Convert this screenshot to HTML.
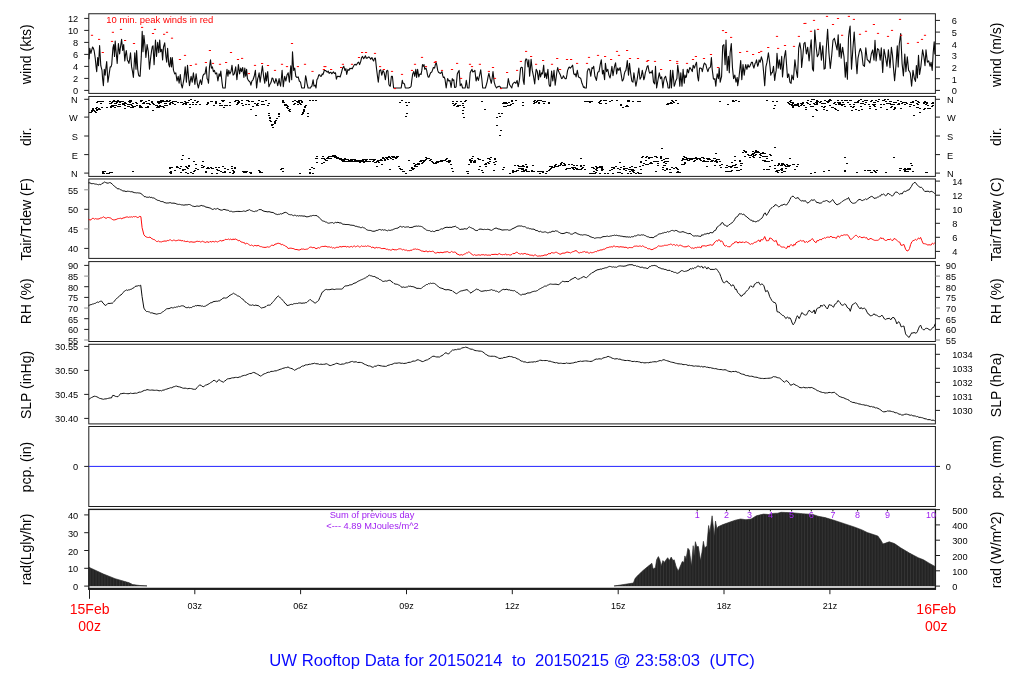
<!DOCTYPE html>
<html lang="en"><head><meta charset="utf-8"><title>UW Rooftop Data</title>
<style>html,body{margin:0;padding:0;background:#fff;}body{width:1024px;height:700px;position:relative;overflow:hidden;font-family:"Liberation Sans",Arial,Helvetica,sans-serif;}</style>
</head><body>
<svg width="1024" height="700" viewBox="0 0 1024 700" style="display:block;position:absolute;left:0;top:0">
<rect width="1024" height="700" fill="#fff"/>
<g opacity="0.995" font-family="'Liberation Sans', Arial, Helvetica, sans-serif">
<rect x="88.8" y="13.75" width="846.6" height="79.65" fill="none" stroke="#1c1c1c" stroke-width="1"/>
<rect x="88.8" y="96.45" width="846.6" height="79.95" fill="none" stroke="#1c1c1c" stroke-width="1"/>
<rect x="88.8" y="178.95" width="846.6" height="79.45" fill="none" stroke="#1c1c1c" stroke-width="1"/>
<rect x="88.8" y="261.60" width="846.6" height="79.90" fill="none" stroke="#1c1c1c" stroke-width="1"/>
<rect x="88.8" y="344.30" width="846.6" height="79.60" fill="none" stroke="#1c1c1c" stroke-width="1"/>
<rect x="88.8" y="426.50" width="846.6" height="80.00" fill="none" stroke="#1c1c1c" stroke-width="1"/>
<rect x="88.8" y="509.40" width="846.6" height="79.78" fill="none" stroke="#1c1c1c" stroke-width="1.35"/>
<line x1="84.2" x2="88.8" y1="90.4" y2="90.4" stroke="#1c1c1c" stroke-width="1"/>
<text x="78.2" y="94.4" font-size="9.25" text-anchor="end" fill="#000">0</text>
<line x1="84.2" x2="88.8" y1="78.4" y2="78.4" stroke="#1c1c1c" stroke-width="1"/>
<text x="78.2" y="82.4" font-size="9.25" text-anchor="end" fill="#000">2</text>
<line x1="84.2" x2="88.8" y1="66.4" y2="66.4" stroke="#1c1c1c" stroke-width="1"/>
<text x="78.2" y="70.4" font-size="9.25" text-anchor="end" fill="#000">4</text>
<line x1="84.2" x2="88.8" y1="54.4" y2="54.4" stroke="#1c1c1c" stroke-width="1"/>
<text x="78.2" y="58.4" font-size="9.25" text-anchor="end" fill="#000">6</text>
<line x1="84.2" x2="88.8" y1="42.4" y2="42.4" stroke="#1c1c1c" stroke-width="1"/>
<text x="78.2" y="46.4" font-size="9.25" text-anchor="end" fill="#000">8</text>
<line x1="84.2" x2="88.8" y1="30.4" y2="30.4" stroke="#1c1c1c" stroke-width="1"/>
<text x="78.2" y="34.4" font-size="9.25" text-anchor="end" fill="#000">10</text>
<line x1="84.2" x2="88.8" y1="18.4" y2="18.4" stroke="#1c1c1c" stroke-width="1"/>
<text x="78.2" y="22.4" font-size="9.25" text-anchor="end" fill="#000">12</text>
<line x1="935.4" x2="940" y1="90.4" y2="90.4" stroke="#1c1c1c" stroke-width="1"/>
<text x="951.8" y="94.4" font-size="9.25" text-anchor="start" fill="#000">0</text>
<line x1="935.4" x2="940" y1="78.7" y2="78.7" stroke="#1c1c1c" stroke-width="1"/>
<text x="951.8" y="82.7" font-size="9.25" text-anchor="start" fill="#000">1</text>
<line x1="935.4" x2="940" y1="67.1" y2="67.1" stroke="#1c1c1c" stroke-width="1"/>
<text x="951.8" y="71" font-size="9.25" text-anchor="start" fill="#000">2</text>
<line x1="935.4" x2="940" y1="55.4" y2="55.4" stroke="#1c1c1c" stroke-width="1"/>
<text x="951.8" y="59.4" font-size="9.25" text-anchor="start" fill="#000">3</text>
<line x1="935.4" x2="940" y1="43.8" y2="43.8" stroke="#1c1c1c" stroke-width="1"/>
<text x="951.8" y="47.7" font-size="9.25" text-anchor="start" fill="#000">4</text>
<line x1="935.4" x2="940" y1="32.1" y2="32.1" stroke="#1c1c1c" stroke-width="1"/>
<text x="951.8" y="36.1" font-size="9.25" text-anchor="start" fill="#000">5</text>
<line x1="935.4" x2="940" y1="20.4" y2="20.4" stroke="#1c1c1c" stroke-width="1"/>
<text x="951.8" y="24.4" font-size="9.25" text-anchor="start" fill="#000">6</text>
<text transform="translate(31 54.2) rotate(-90) scale(1.012 1)" font-size="13.85" text-anchor="middle" fill="#000">wind (kts)</text>
<text transform="translate(1001.3 54.8) rotate(-90) scale(1.012 1)" font-size="13.85" text-anchor="middle" fill="#000">wind (m/s)</text>
<line x1="84.2" x2="88.8" y1="99.3" y2="99.3" stroke="#1c1c1c" stroke-width="1"/>
<text x="77.8" y="103.2" font-size="9.25" text-anchor="end" fill="#000">N</text>
<line x1="935.4" x2="940" y1="99.3" y2="99.3" stroke="#1c1c1c" stroke-width="1"/>
<text x="946.9" y="103.2" font-size="9.25" text-anchor="start" fill="#000">N</text>
<line x1="84.2" x2="88.8" y1="117.1" y2="117.1" stroke="#1c1c1c" stroke-width="1"/>
<text x="77.8" y="121" font-size="9.25" text-anchor="end" fill="#000">W</text>
<line x1="935.4" x2="940" y1="117.1" y2="117.1" stroke="#1c1c1c" stroke-width="1"/>
<text x="946.9" y="121" font-size="9.25" text-anchor="start" fill="#000">W</text>
<line x1="84.2" x2="88.8" y1="136" y2="136" stroke="#1c1c1c" stroke-width="1"/>
<text x="77.8" y="139.9" font-size="9.25" text-anchor="end" fill="#000">S</text>
<line x1="935.4" x2="940" y1="136" y2="136" stroke="#1c1c1c" stroke-width="1"/>
<text x="946.9" y="139.9" font-size="9.25" text-anchor="start" fill="#000">S</text>
<line x1="84.2" x2="88.8" y1="154.6" y2="154.6" stroke="#1c1c1c" stroke-width="1"/>
<text x="77.8" y="158.5" font-size="9.25" text-anchor="end" fill="#000">E</text>
<line x1="935.4" x2="940" y1="154.6" y2="154.6" stroke="#1c1c1c" stroke-width="1"/>
<text x="946.9" y="158.5" font-size="9.25" text-anchor="start" fill="#000">E</text>
<line x1="84.2" x2="88.8" y1="173.1" y2="173.1" stroke="#1c1c1c" stroke-width="1"/>
<text x="77.8" y="177" font-size="9.25" text-anchor="end" fill="#000">N</text>
<line x1="935.4" x2="940" y1="173.1" y2="173.1" stroke="#1c1c1c" stroke-width="1"/>
<text x="946.9" y="177" font-size="9.25" text-anchor="start" fill="#000">N</text>
<text transform="translate(31 136.7) rotate(-90) scale(1.012 1)" font-size="13.85" text-anchor="middle" fill="#000">dir.</text>
<text transform="translate(1001.3 136.6) rotate(-90) scale(1.012 1)" font-size="13.85" text-anchor="middle" fill="#000">dir.</text>
<line x1="84.2" x2="88.8" y1="189.8" y2="189.8" stroke="#888" stroke-width="1"/>
<text x="78.2" y="193.8" font-size="9.25" text-anchor="end" fill="#000">55</text>
<line x1="84.2" x2="88.8" y1="209.3" y2="209.3" stroke="#1c1c1c" stroke-width="1"/>
<text x="78.2" y="213.3" font-size="9.25" text-anchor="end" fill="#000">50</text>
<line x1="84.2" x2="88.8" y1="228.9" y2="228.9" stroke="#888" stroke-width="1"/>
<text x="78.2" y="232.8" font-size="9.25" text-anchor="end" fill="#000">45</text>
<line x1="84.2" x2="88.8" y1="248.4" y2="248.4" stroke="#1c1c1c" stroke-width="1"/>
<text x="78.2" y="252.4" font-size="9.25" text-anchor="end" fill="#000">40</text>
<line x1="935.4" x2="940" y1="181.1" y2="181.1" stroke="#1c1c1c" stroke-width="1"/>
<text x="952.2" y="185" font-size="9.25" text-anchor="start" fill="#000">14</text>
<line x1="935.4" x2="940" y1="195.2" y2="195.2" stroke="#1c1c1c" stroke-width="1"/>
<text x="952.2" y="199.1" font-size="9.25" text-anchor="start" fill="#000">12</text>
<line x1="935.4" x2="940" y1="209.2" y2="209.2" stroke="#1c1c1c" stroke-width="1"/>
<text x="952.2" y="213.2" font-size="9.25" text-anchor="start" fill="#000">10</text>
<line x1="935.4" x2="940" y1="223.3" y2="223.3" stroke="#1c1c1c" stroke-width="1"/>
<text x="952.2" y="227.2" font-size="9.25" text-anchor="start" fill="#000">8</text>
<line x1="935.4" x2="940" y1="237.3" y2="237.3" stroke="#1c1c1c" stroke-width="1"/>
<text x="952.2" y="241.3" font-size="9.25" text-anchor="start" fill="#000">6</text>
<line x1="935.4" x2="940" y1="251.4" y2="251.4" stroke="#1c1c1c" stroke-width="1"/>
<text x="952.2" y="255.3" font-size="9.25" text-anchor="start" fill="#000">4</text>
<text transform="translate(31 219.3) rotate(-90) scale(1.012 1)" font-size="13.85" text-anchor="middle" fill="#000">Tair/Tdew (F)</text>
<text transform="translate(1001.3 219.3) rotate(-90) scale(1.012 1)" font-size="13.85" text-anchor="middle" fill="#000">Tair/Tdew (C)</text>
<line x1="84.2" x2="88.8" y1="265.4" y2="265.4" stroke="#1c1c1c" stroke-width="1"/>
<text x="78.2" y="269.3" font-size="9.25" text-anchor="end" fill="#000">90</text>
<line x1="935.4" x2="940" y1="265.4" y2="265.4" stroke="#1c1c1c" stroke-width="1"/>
<text x="945.8" y="269.3" font-size="9.25" text-anchor="start" fill="#000">90</text>
<line x1="84.2" x2="88.8" y1="276.1" y2="276.1" stroke="#888" stroke-width="1"/>
<text x="78.2" y="280" font-size="9.25" text-anchor="end" fill="#000">85</text>
<line x1="935.4" x2="940" y1="276.1" y2="276.1" stroke="#888" stroke-width="1"/>
<text x="945.8" y="280" font-size="9.25" text-anchor="start" fill="#000">85</text>
<line x1="84.2" x2="88.8" y1="286.7" y2="286.7" stroke="#1c1c1c" stroke-width="1"/>
<text x="78.2" y="290.7" font-size="9.25" text-anchor="end" fill="#000">80</text>
<line x1="935.4" x2="940" y1="286.7" y2="286.7" stroke="#1c1c1c" stroke-width="1"/>
<text x="945.8" y="290.7" font-size="9.25" text-anchor="start" fill="#000">80</text>
<line x1="84.2" x2="88.8" y1="297.4" y2="297.4" stroke="#1c1c1c" stroke-width="1"/>
<text x="78.2" y="301.3" font-size="9.25" text-anchor="end" fill="#000">75</text>
<line x1="935.4" x2="940" y1="297.4" y2="297.4" stroke="#1c1c1c" stroke-width="1"/>
<text x="945.8" y="301.3" font-size="9.25" text-anchor="start" fill="#000">75</text>
<line x1="84.2" x2="88.8" y1="308" y2="308" stroke="#888" stroke-width="1"/>
<text x="78.2" y="312" font-size="9.25" text-anchor="end" fill="#000">70</text>
<line x1="935.4" x2="940" y1="308" y2="308" stroke="#888" stroke-width="1"/>
<text x="945.8" y="312" font-size="9.25" text-anchor="start" fill="#000">70</text>
<line x1="84.2" x2="88.8" y1="318.7" y2="318.7" stroke="#1c1c1c" stroke-width="1"/>
<text x="78.2" y="322.6" font-size="9.25" text-anchor="end" fill="#000">65</text>
<line x1="935.4" x2="940" y1="318.7" y2="318.7" stroke="#1c1c1c" stroke-width="1"/>
<text x="945.8" y="322.6" font-size="9.25" text-anchor="start" fill="#000">65</text>
<line x1="84.2" x2="88.8" y1="329.4" y2="329.4" stroke="#1c1c1c" stroke-width="1"/>
<text x="78.2" y="333.3" font-size="9.25" text-anchor="end" fill="#000">60</text>
<line x1="935.4" x2="940" y1="329.4" y2="329.4" stroke="#1c1c1c" stroke-width="1"/>
<text x="945.8" y="333.3" font-size="9.25" text-anchor="start" fill="#000">60</text>
<line x1="84.2" x2="88.8" y1="340" y2="340" stroke="#888" stroke-width="1"/>
<text x="78.2" y="344" font-size="9.25" text-anchor="end" fill="#000">55</text>
<line x1="935.4" x2="940" y1="340" y2="340" stroke="#888" stroke-width="1"/>
<text x="945.8" y="344" font-size="9.25" text-anchor="start" fill="#000">55</text>
<text transform="translate(31 301.3) rotate(-90) scale(1.012 1)" font-size="13.85" text-anchor="middle" fill="#000">RH (%)</text>
<text transform="translate(1001.3 301.3) rotate(-90) scale(1.012 1)" font-size="13.85" text-anchor="middle" fill="#000">RH (%)</text>
<line x1="84.2" x2="88.8" y1="346.4" y2="346.4" stroke="#1c1c1c" stroke-width="1"/>
<text x="78.2" y="350.3" font-size="9.25" text-anchor="end" fill="#000">30.55</text>
<line x1="84.2" x2="88.8" y1="370.4" y2="370.4" stroke="#1c1c1c" stroke-width="1"/>
<text x="78.2" y="374.3" font-size="9.25" text-anchor="end" fill="#000">30.50</text>
<line x1="84.2" x2="88.8" y1="394.4" y2="394.4" stroke="#1c1c1c" stroke-width="1"/>
<text x="78.2" y="398.3" font-size="9.25" text-anchor="end" fill="#000">30.45</text>
<line x1="84.2" x2="88.8" y1="418.4" y2="418.4" stroke="#1c1c1c" stroke-width="1"/>
<text x="78.2" y="422.3" font-size="9.25" text-anchor="end" fill="#000">30.40</text>
<line x1="935.4" x2="940" y1="354.3" y2="354.3" stroke="#1c1c1c" stroke-width="1"/>
<text x="952.2" y="358.2" font-size="9.25" text-anchor="start" fill="#000">1034</text>
<line x1="935.4" x2="940" y1="368.3" y2="368.3" stroke="#1c1c1c" stroke-width="1"/>
<text x="952.2" y="372.3" font-size="9.25" text-anchor="start" fill="#000">1033</text>
<line x1="935.4" x2="940" y1="382.4" y2="382.4" stroke="#1c1c1c" stroke-width="1"/>
<text x="952.2" y="386.3" font-size="9.25" text-anchor="start" fill="#000">1032</text>
<line x1="935.4" x2="940" y1="396.4" y2="396.4" stroke="#1c1c1c" stroke-width="1"/>
<text x="952.2" y="400.3" font-size="9.25" text-anchor="start" fill="#000">1031</text>
<line x1="935.4" x2="940" y1="410.4" y2="410.4" stroke="#1c1c1c" stroke-width="1"/>
<text x="952.2" y="414.4" font-size="9.25" text-anchor="start" fill="#000">1030</text>
<text transform="translate(31 385) rotate(-90) scale(1.012 1)" font-size="13.85" text-anchor="middle" fill="#000">SLP (inHg)</text>
<text transform="translate(1001.3 385) rotate(-90) scale(1.012 1)" font-size="13.85" text-anchor="middle" fill="#000">SLP (hPa)</text>
<line x1="84.2" x2="88.8" y1="466.4" y2="466.4" stroke="#1c1c1c" stroke-width="1"/>
<text x="78.2" y="470.3" font-size="9.25" text-anchor="end" fill="#000">0</text>
<line x1="935.4" x2="940" y1="466.4" y2="466.4" stroke="#1c1c1c" stroke-width="1"/>
<text x="945.8" y="470.3" font-size="9.25" text-anchor="start" fill="#000">0</text>
<line x1="88.8" x2="935.4" y1="466.4" y2="466.4" stroke="#2222ff" stroke-width="1"/>
<text transform="translate(31 467.1) rotate(-90) scale(1.012 1)" font-size="13.85" text-anchor="middle" fill="#000">pcp. (in)</text>
<text transform="translate(1001.3 466.9) rotate(-90) scale(1.012 1)" font-size="13.85" text-anchor="middle" fill="#000">pcp. (mm)</text>
<line x1="84.2" x2="88.8" y1="514.9" y2="514.9" stroke="#1c1c1c" stroke-width="1"/>
<text x="78.2" y="518.9" font-size="9.25" text-anchor="end" fill="#000">40</text>
<line x1="84.2" x2="88.8" y1="532.7" y2="532.7" stroke="#1c1c1c" stroke-width="1"/>
<text x="78.2" y="536.6" font-size="9.25" text-anchor="end" fill="#000">30</text>
<line x1="84.2" x2="88.8" y1="550.5" y2="550.5" stroke="#1c1c1c" stroke-width="1"/>
<text x="78.2" y="554.5" font-size="9.25" text-anchor="end" fill="#000">20</text>
<line x1="84.2" x2="88.8" y1="568.3" y2="568.3" stroke="#1c1c1c" stroke-width="1"/>
<text x="78.2" y="572.2" font-size="9.25" text-anchor="end" fill="#000">10</text>
<line x1="84.2" x2="88.8" y1="586.1" y2="586.1" stroke="#1c1c1c" stroke-width="1"/>
<text x="78.2" y="590.1" font-size="9.25" text-anchor="end" fill="#000">0</text>
<line x1="935.4" x2="940" y1="509.6" y2="509.6" stroke="#1c1c1c" stroke-width="1"/>
<text x="952.2" y="513.6" font-size="9.25" text-anchor="start" fill="#000">500</text>
<line x1="935.4" x2="940" y1="524.9" y2="524.9" stroke="#1c1c1c" stroke-width="1"/>
<text x="952.2" y="528.9" font-size="9.25" text-anchor="start" fill="#000">400</text>
<line x1="935.4" x2="940" y1="540.2" y2="540.2" stroke="#1c1c1c" stroke-width="1"/>
<text x="952.2" y="544.2" font-size="9.25" text-anchor="start" fill="#000">300</text>
<line x1="935.4" x2="940" y1="555.5" y2="555.5" stroke="#1c1c1c" stroke-width="1"/>
<text x="952.2" y="559.5" font-size="9.25" text-anchor="start" fill="#000">200</text>
<line x1="935.4" x2="940" y1="570.8" y2="570.8" stroke="#1c1c1c" stroke-width="1"/>
<text x="952.2" y="574.8" font-size="9.25" text-anchor="start" fill="#000">100</text>
<line x1="935.4" x2="940" y1="586.1" y2="586.1" stroke="#1c1c1c" stroke-width="1"/>
<text x="952.2" y="590.1" font-size="9.25" text-anchor="start" fill="#000">0</text>
<text transform="translate(31 549.4) rotate(-90) scale(1.012 1)" font-size="13.85" text-anchor="middle" fill="#000">rad(Lgly/hr)</text>
<text transform="translate(1001.3 550) rotate(-90) scale(1.012 1)" font-size="13.85" text-anchor="middle" fill="#000">rad (W/m^2)</text>
<line x1="88.3" x2="935.9" y1="588.8" y2="588.8" stroke="#1c1c1c" stroke-width="2"/>
<line x1="194.8" x2="194.8" y1="589.2" y2="594.2" stroke="#1c1c1c" stroke-width="1"/>
<text x="194.8" y="609.2" font-size="9" text-anchor="middle" fill="#000">03z</text>
<line x1="300.6" x2="300.6" y1="589.2" y2="594.2" stroke="#1c1c1c" stroke-width="1"/>
<text x="300.6" y="609.2" font-size="9" text-anchor="middle" fill="#000">06z</text>
<line x1="406.5" x2="406.5" y1="589.2" y2="594.2" stroke="#1c1c1c" stroke-width="1"/>
<text x="406.5" y="609.2" font-size="9" text-anchor="middle" fill="#000">09z</text>
<line x1="512.3" x2="512.3" y1="589.2" y2="594.2" stroke="#1c1c1c" stroke-width="1"/>
<text x="512.3" y="609.2" font-size="9" text-anchor="middle" fill="#000">12z</text>
<line x1="618.2" x2="618.2" y1="589.2" y2="594.2" stroke="#1c1c1c" stroke-width="1"/>
<text x="618.2" y="609.2" font-size="9" text-anchor="middle" fill="#000">15z</text>
<line x1="724" x2="724" y1="589.2" y2="594.2" stroke="#1c1c1c" stroke-width="1"/>
<text x="724" y="609.2" font-size="9" text-anchor="middle" fill="#000">18z</text>
<line x1="829.9" x2="829.9" y1="589.2" y2="594.2" stroke="#1c1c1c" stroke-width="1"/>
<text x="829.9" y="609.2" font-size="9" text-anchor="middle" fill="#000">21z</text>
<line x1="89.5" x2="89.5" y1="589.2" y2="598.8" stroke="#1c1c1c" stroke-width="1"/>
<text transform="translate(89.6 614.3) scale(1.012 1)" font-size="13.85" text-anchor="middle" fill="#ff0000">15Feb</text>
<text transform="translate(89.6 630.8) scale(1.012 1)" font-size="13.85" text-anchor="middle" fill="#ff0000">00z</text>
<text transform="translate(936.2 614.3) scale(1.012 1)" font-size="13.85" text-anchor="middle" fill="#ff0000">16Feb</text>
<text transform="translate(936.2 630.8) scale(1.012 1)" font-size="13.85" text-anchor="middle" fill="#ff0000">00z</text>
<text x="269.3" y="666.2" font-size="16.66" fill="#0808ff" style="white-space:pre">UW Rooftop Data for 20150214  to  20150215 @ 23:58:03  (UTC)</text>
<path d="M88.8 585.9 L88.8 567.2 L103.4 574 L115.2 578.7 L129.2 582.8 L132.7 584.6 L140 585.5 L147 585.9 L147 585.9 Z" fill="#222" stroke="#222" stroke-width="0.6" stroke-linejoin="round"/>
<path d="M614.1 585.9 L614.1 586 L633.4 583 L635.2 578.2 L637.8 575.6 L642.2 571.2 L647.5 566.8 L651.9 563.3 L653.1 568.9 L655.4 567.7 L656.6 559.8 L658.4 556.6 L659.8 559.8 L661.2 565.9 L662.9 560.6 L664.2 562.4 L667.7 557.7 L669.4 560.6 L671.2 557.1 L672.9 560.6 L674.2 559.8 L675.9 565.9 L678.2 571.2 L682.3 561.5 L684 562.4 L684.9 555.9 L686.1 558.9 L687.9 548.3 L689.3 550.1 L691.4 565.9 L693.2 545.7 L694 556.2 L695.4 541.7 L696.7 546.6 L698.4 546.6 L700.5 560.6 L701.9 552.7 L703.4 541.3 L704.6 548.3 L706.9 545.7 L708.6 525.5 L709.9 532.5 L712.1 515.8 L714.3 536 L715.5 521.1 L716.9 529 L718.1 526.7 L723 524.6 L730.1 522 L735.3 520.2 L740.6 519 L745.9 519.7 L751.2 519 L756.4 515.8 L763.5 514.1 L768.7 514.5 L773.1 513.4 L777.6 513.2 L781.1 512.3 L791.6 512.7 L802.2 513.7 L812.7 514.4 L818 516.2 L825 517.6 L833.8 520.2 L844.4 523.7 L854.9 527.2 L862 529.9 L867.2 532.5 L877.8 536 L880.4 539.5 L883 543.9 L885.7 543.1 L889.2 541.8 L894.5 543.6 L900.6 547.8 L909.4 553.1 L918.2 557.7 L923.5 559.8 L928.7 562.9 L934.9 566.4 L934.9 585.9 Z" fill="#222" stroke="#222" stroke-width="0.6" stroke-linejoin="round"/>
<clipPath id="rc"><path d="M88.8 585.9 L88.8 567.2 L103.4 574 L115.2 578.7 L129.2 582.8 L132.7 584.6 L140 585.5 L147 585.9 L147 585.9 Z"/><path d="M614.1 585.9 L614.1 586 L633.4 583 L635.2 578.2 L637.8 575.6 L642.2 571.2 L647.5 566.8 L651.9 563.3 L653.1 568.9 L655.4 567.7 L656.6 559.8 L658.4 556.6 L659.8 559.8 L661.2 565.9 L662.9 560.6 L664.2 562.4 L667.7 557.7 L669.4 560.6 L671.2 557.1 L672.9 560.6 L674.2 559.8 L675.9 565.9 L678.2 571.2 L682.3 561.5 L684 562.4 L684.9 555.9 L686.1 558.9 L687.9 548.3 L689.3 550.1 L691.4 565.9 L693.2 545.7 L694 556.2 L695.4 541.7 L696.7 546.6 L698.4 546.6 L700.5 560.6 L701.9 552.7 L703.4 541.3 L704.6 548.3 L706.9 545.7 L708.6 525.5 L709.9 532.5 L712.1 515.8 L714.3 536 L715.5 521.1 L716.9 529 L718.1 526.7 L723 524.6 L730.1 522 L735.3 520.2 L740.6 519 L745.9 519.7 L751.2 519 L756.4 515.8 L763.5 514.1 L768.7 514.5 L773.1 513.4 L777.6 513.2 L781.1 512.3 L791.6 512.7 L802.2 513.7 L812.7 514.4 L818 516.2 L825 517.6 L833.8 520.2 L844.4 523.7 L854.9 527.2 L862 529.9 L867.2 532.5 L877.8 536 L880.4 539.5 L883 543.9 L885.7 543.1 L889.2 541.8 L894.5 543.6 L900.6 547.8 L909.4 553.1 L918.2 557.7 L923.5 559.8 L928.7 562.9 L934.9 566.4 L934.9 585.9 Z"/></clipPath>
<path clip-path="url(#rc)" d="M90.2 510V587 M93.1 510V587 M96.1 510V587 M99 510V587 M102 510V587 M104.9 510V587 M107.8 510V587 M110.8 510V587 M113.7 510V587 M116.7 510V587 M119.6 510V587 M122.5 510V587 M125.5 510V587 M128.4 510V587 M131.4 510V587 M134.3 510V587 M137.2 510V587 M140.2 510V587 M143.1 510V587 M146.1 510V587 M149 510V587 M151.9 510V587 M154.9 510V587 M157.8 510V587 M160.8 510V587 M163.7 510V587 M166.6 510V587 M169.6 510V587 M172.5 510V587 M175.5 510V587 M178.4 510V587 M181.3 510V587 M184.3 510V587 M187.2 510V587 M190.2 510V587 M193.1 510V587 M196 510V587 M199 510V587 M201.9 510V587 M204.9 510V587 M207.8 510V587 M210.7 510V587 M213.7 510V587 M216.6 510V587 M219.6 510V587 M222.5 510V587 M225.4 510V587 M228.4 510V587 M231.3 510V587 M234.3 510V587 M237.2 510V587 M240.1 510V587 M243.1 510V587 M246 510V587 M249 510V587 M251.9 510V587 M254.8 510V587 M257.8 510V587 M260.7 510V587 M263.7 510V587 M266.6 510V587 M269.5 510V587 M272.5 510V587 M275.4 510V587 M278.4 510V587 M281.3 510V587 M284.2 510V587 M287.2 510V587 M290.1 510V587 M293.1 510V587 M296 510V587 M298.9 510V587 M301.9 510V587 M304.8 510V587 M307.8 510V587 M310.7 510V587 M313.6 510V587 M316.6 510V587 M319.5 510V587 M322.5 510V587 M325.4 510V587 M328.3 510V587 M331.3 510V587 M334.2 510V587 M337.2 510V587 M340.1 510V587 M343 510V587 M346 510V587 M348.9 510V587 M351.9 510V587 M354.8 510V587 M357.7 510V587 M360.7 510V587 M363.6 510V587 M366.6 510V587 M369.5 510V587 M372.4 510V587 M375.4 510V587 M378.3 510V587 M381.3 510V587 M384.2 510V587 M387.1 510V587 M390.1 510V587 M393 510V587 M396 510V587 M398.9 510V587 M401.8 510V587 M404.8 510V587 M407.7 510V587 M410.7 510V587 M413.6 510V587 M416.5 510V587 M419.5 510V587 M422.4 510V587 M425.4 510V587 M428.3 510V587 M431.2 510V587 M434.2 510V587 M437.1 510V587 M440.1 510V587 M443 510V587 M445.9 510V587 M448.9 510V587 M451.8 510V587 M454.8 510V587 M457.7 510V587 M460.6 510V587 M463.6 510V587 M466.5 510V587 M469.5 510V587 M472.4 510V587 M475.3 510V587 M478.3 510V587 M481.2 510V587 M484.2 510V587 M487.1 510V587 M490 510V587 M493 510V587 M495.9 510V587 M498.9 510V587 M501.8 510V587 M504.7 510V587 M507.7 510V587 M510.6 510V587 M513.6 510V587 M516.5 510V587 M519.4 510V587 M522.4 510V587 M525.3 510V587 M528.3 510V587 M531.2 510V587 M534.1 510V587 M537.1 510V587 M540 510V587 M543 510V587 M545.9 510V587 M548.8 510V587 M551.8 510V587 M554.7 510V587 M557.7 510V587 M560.6 510V587 M563.5 510V587 M566.5 510V587 M569.4 510V587 M572.4 510V587 M575.3 510V587 M578.2 510V587 M581.2 510V587 M584.1 510V587 M587.1 510V587 M590 510V587 M592.9 510V587 M595.9 510V587 M598.8 510V587 M601.8 510V587 M604.7 510V587 M607.6 510V587 M610.6 510V587 M613.5 510V587 M616.5 510V587 M619.4 510V587 M622.3 510V587 M625.3 510V587 M628.2 510V587 M631.2 510V587 M634.1 510V587 M637 510V587 M640 510V587 M642.9 510V587 M645.9 510V587 M648.8 510V587 M651.7 510V587 M654.7 510V587 M657.6 510V587 M660.6 510V587 M663.5 510V587 M666.4 510V587 M669.4 510V587 M672.3 510V587 M675.3 510V587 M678.2 510V587 M681.1 510V587 M684.1 510V587 M687 510V587 M690 510V587 M692.9 510V587 M695.8 510V587 M698.8 510V587 M701.7 510V587 M704.7 510V587 M707.6 510V587 M710.5 510V587 M713.5 510V587 M716.4 510V587 M719.4 510V587 M722.3 510V587 M725.2 510V587 M728.2 510V587 M731.1 510V587 M734.1 510V587 M737 510V587 M739.9 510V587 M742.9 510V587 M745.8 510V587 M748.8 510V587 M751.7 510V587 M754.6 510V587 M757.6 510V587 M760.5 510V587 M763.5 510V587 M766.4 510V587 M769.3 510V587 M772.3 510V587 M775.2 510V587 M778.2 510V587 M781.1 510V587 M784 510V587 M787 510V587 M789.9 510V587 M792.9 510V587 M795.8 510V587 M798.7 510V587 M801.7 510V587 M804.6 510V587 M807.6 510V587 M810.5 510V587 M813.4 510V587 M816.4 510V587 M819.3 510V587 M822.3 510V587 M825.2 510V587 M828.1 510V587 M831.1 510V587 M834 510V587 M837 510V587 M839.9 510V587 M842.8 510V587 M845.8 510V587 M848.7 510V587 M851.7 510V587 M854.6 510V587 M857.5 510V587 M860.5 510V587 M863.4 510V587 M866.4 510V587 M869.3 510V587 M872.2 510V587 M875.2 510V587 M878.1 510V587 M881.1 510V587 M884 510V587 M886.9 510V587 M889.9 510V587 M892.8 510V587 M895.8 510V587 M898.7 510V587 M901.6 510V587 M904.6 510V587 M907.5 510V587 M910.5 510V587 M913.4 510V587 M916.3 510V587 M919.3 510V587 M922.2 510V587 M925.2 510V587 M928.1 510V587 M931 510V587 M934 510V587" stroke="#3c3c3c" stroke-width="0.7" fill="none"/>
<text x="372" y="517.8" font-size="9.3" text-anchor="middle" fill="#a020f0">Sum of previous day</text>
<text x="372.5" y="528.6" font-size="9.3" text-anchor="middle" fill="#a020f0">&lt;--- 4.89 MJoules/m^2</text>
<text x="697.2" y="518" font-size="9" text-anchor="middle" fill="#a020f0">1</text>
<line x1="697.2" x2="697.2" y1="509.4" y2="511.4" stroke="#1c1c1c" stroke-width="1"/>
<text x="726.6" y="518" font-size="9" text-anchor="middle" fill="#a020f0">2</text>
<line x1="726.6" x2="726.6" y1="509.4" y2="511.4" stroke="#1c1c1c" stroke-width="1"/>
<text x="749.4" y="518" font-size="9" text-anchor="middle" fill="#a020f0">3</text>
<line x1="749.4" x2="749.4" y1="509.4" y2="511.4" stroke="#1c1c1c" stroke-width="1"/>
<text x="770.4" y="518" font-size="9" text-anchor="middle" fill="#a020f0">4</text>
<line x1="770.4" x2="770.4" y1="509.4" y2="511.4" stroke="#1c1c1c" stroke-width="1"/>
<text x="791.6" y="518" font-size="9" text-anchor="middle" fill="#a020f0">5</text>
<line x1="791.6" x2="791.6" y1="509.4" y2="511.4" stroke="#1c1c1c" stroke-width="1"/>
<text x="811.3" y="518" font-size="9" text-anchor="middle" fill="#a020f0">6</text>
<line x1="811.3" x2="811.3" y1="509.4" y2="511.4" stroke="#1c1c1c" stroke-width="1"/>
<text x="832.9" y="518" font-size="9" text-anchor="middle" fill="#a020f0">7</text>
<line x1="832.9" x2="832.9" y1="509.4" y2="511.4" stroke="#1c1c1c" stroke-width="1"/>
<text x="857.6" y="518" font-size="9" text-anchor="middle" fill="#a020f0">8</text>
<line x1="857.6" x2="857.6" y1="509.4" y2="511.4" stroke="#1c1c1c" stroke-width="1"/>
<text x="887.4" y="518" font-size="9" text-anchor="middle" fill="#a020f0">9</text>
<line x1="887.4" x2="887.4" y1="509.4" y2="511.4" stroke="#1c1c1c" stroke-width="1"/>
<line x1="372" x2="372" y1="509.4" y2="511.4" stroke="#1c1c1c" stroke-width="1"/>
<text x="936" y="518" font-size="9" text-anchor="end" fill="#a020f0">10</text>
<g fill="none" stroke-linejoin="round" stroke-linecap="round">
<path d="M88.9 182.9 L90 182.8 L91.1 183.6 L92.2 183.7 L93.3 183.5 L94.4 183.9 L95.5 184.1 L96.6 184.2 L97.6 184.5 L98.7 184.8 L99.7 184.3 L100.8 184.8 L102 183.4 L103.1 183.2 L104.3 182 L105.7 182.5 L107 183.1 L108.3 183.1 L109.6 182.6 L110.9 182.9 L112.2 184.1 L113.3 185.1 L114.4 186.3 L115.5 186.9 L116.6 188.2 L117.9 188.9 L119.3 188.7 L120.5 189.9 L121.6 189.9 L122.8 191.2 L123.9 190.8 L125 191.2 L126.1 191.6 L127.2 191.2 L128.4 191.3 L129.5 191.4 L130.7 191.8 L131.9 191.7 L133 192.1 L134.2 192.6 L135.3 192.7 L136.4 192.9 L137.6 192.8 L138.7 193 L139.8 193.1 L140.9 193.5 L142.2 194.6 L143.5 195.6 L144.8 197 L145.8 196.6 L146.8 197.4 L147.8 197.2 L148.8 197.3 L149.8 196.9 L150.8 197.7 L151.8 197.3 L152.8 198.1 L153.8 197.9 L154.8 198.5 L155.8 199.3 L156.8 199.8 L157.8 200.4 L158.8 200.5 L159.8 200.8 L160.8 201.5 L161.8 201.6 L162.9 201.6 L163.9 202.2 L164.9 202.8 L165.9 202.8 L166.9 203.2 L167.9 202.9 L168.9 203 L169.9 202.6 L170.9 202.8 L171.9 203.3 L172.9 203.1 L174 203.2 L175.1 203.3 L176.2 203.8 L177.3 204.2 L178.4 204.4 L179.5 204.3 L180.6 204.6 L181.7 204.9 L182.8 204.9 L183.9 205.2 L185 204.9 L186.1 204.8 L187.2 204.9 L188.3 204.5 L189.4 204.5 L190.5 204.9 L191.6 205.5 L192.7 206.2 L193.8 206.3 L194.9 206.6 L195.9 206.3 L196.9 206 L197.9 206.1 L198.9 206.3 L199.9 206 L200.9 205.6 L201.9 205.4 L202.9 206.1 L203.9 205.9 L204.9 206.5 L206 207.2 L207 207.2 L208 207.5 L209.1 207.8 L210.1 208 L211.2 208.6 L212.2 209.4 L213.3 209.3 L214.4 208.6 L215.5 209.1 L216.6 208.9 L217.7 208.4 L218.9 209.3 L220 209.8 L221.2 210.2 L222.6 210 L223.9 209.3 L225 209.6 L226.1 210 L227.2 210.2 L228.3 210.2 L229.4 211.3 L230.5 211.3 L231.6 211.3 L232.7 211.9 L233.7 211.8 L234.8 211.7 L235.8 211.5 L236.9 211.4 L237.9 211.4 L239 211.4 L240.2 211.5 L241.3 211.5 L242.4 211.4 L243.5 211 L244.7 211.2 L245.8 211.4 L247 210.5 L248.2 210.3 L249.4 209.6 L250.4 210.3 L251.5 210.7 L252.5 211.1 L253.6 211.5 L254.6 211.6 L255.7 211 L256.7 211.1 L257.8 210.6 L258.8 209.6 L259.9 209.6 L260.9 209.6 L261.9 210 L263 211 L264 211 L265 211.6 L266 211.4 L267 211.9 L268 211.8 L269 211.7 L270 211.9 L271 212.3 L272 212.4 L273.1 212.5 L274.1 213.1 L275.2 213.9 L276.2 214.1 L277.3 214.6 L278.4 214.3 L279.5 214.3 L280.6 213.7 L281.7 214 L282.9 213.3 L284 212.8 L285.2 212.3 L286.3 212.6 L287.4 213.1 L288.5 214.4 L289.6 214.6 L290.6 214.8 L291.6 214.7 L292.6 215.3 L293.6 215.7 L294.6 215.2 L295.6 215.4 L296.6 216 L297.7 215.6 L298.7 216.1 L299.8 215.6 L300.8 216 L301.9 215.8 L302.9 216.1 L304 216.1 L305 216 L306 216.8 L307.1 216.8 L308.1 216.7 L309.1 216.5 L310.2 215.9 L311.2 216.1 L312.3 215.6 L313.3 215.4 L314.6 215.6 L315.9 215.5 L317.2 215.8 L318.2 216.9 L319.2 217.4 L320.2 218.6 L321.2 219.8 L322.2 220.7 L323.3 221.1 L324.3 221.1 L325.3 222.1 L326.4 222.1 L327.4 222.8 L328.4 223.2 L329.4 223.1 L330.4 222.8 L331.4 222.7 L332.4 222.5 L333.4 223.3 L334.4 223 L335.6 222.3 L336.8 222.7 L338 222.1 L339 222.9 L340 222.9 L341.1 222.9 L342.1 223.8 L343.1 224.3 L344.1 224.2 L345.1 224.5 L346.1 224.5 L347.1 224.5 L348.1 224.6 L349.1 224.6 L350.1 225.1 L351.1 225.1 L352.1 225.3 L353.1 225.3 L354.1 225.5 L355.2 226.3 L356.2 226.2 L357.2 226.6 L358.2 226.9 L359.2 226.9 L360.3 227.6 L361.3 227.7 L362.4 227.1 L363.4 227.7 L364.5 228 L365.5 228.6 L366.6 229.8 L367.6 230.1 L368.7 230.4 L369.8 230.4 L370.8 230.5 L371.9 231 L372.9 231.3 L374 231.2 L375.1 231.2 L376.1 230.4 L377.2 230.5 L378.2 230 L379.3 229.5 L380.3 229.6 L381.3 230.2 L382.3 229.6 L383.3 230.2 L384.3 229.8 L385.3 230 L386.3 230.4 L387.5 230.8 L388.6 230.1 L389.8 230.4 L390.8 230.3 L391.8 229.9 L392.8 229.8 L393.8 229.1 L394.8 228.8 L395.8 228.4 L396.8 228.3 L398 228 L399.1 227.1 L400.3 226.3 L401.4 226.9 L402.4 227 L403.5 226.5 L404.5 227.1 L405.6 227.2 L406.7 226.9 L407.7 226.9 L408.8 226.9 L409.8 227.7 L410.9 227.4 L412 227.4 L413 227.1 L414.1 226.4 L415.1 226.4 L416.2 226 L417.3 226.3 L418.4 226 L419.5 226.3 L420.6 226.3 L421.6 226.6 L422.6 227.1 L423.6 227.8 L424.6 229 L425.6 229.3 L426.6 230.2 L427.6 230.4 L428.6 230.6 L429.6 230.6 L430.6 231.3 L431.7 231.5 L432.7 231 L433.7 231.6 L434.8 231.5 L435.9 230.6 L437 230.4 L438.1 230.4 L439.2 230.3 L440.4 229.1 L441.6 228.8 L442.7 229 L443.9 228.1 L445 227.7 L446 227.3 L447 227.3 L448 227.3 L449 227.6 L450 227 L451 227.6 L452 227.2 L453.1 226.7 L454.1 226.8 L455.2 226 L456.4 227.2 L457.5 227.6 L458.7 228.4 L459.9 229.5 L460.9 229.4 L462 229 L463 229.4 L464 228.8 L465.1 228.7 L466.1 229.1 L467.3 228.8 L468.4 227.4 L469.6 226.9 L470.6 227.6 L471.7 228 L472.7 228.5 L473.7 228.8 L474.8 230.2 L475.8 230.4 L476.8 230.6 L477.9 230.3 L478.9 229.3 L480 229.1 L481 229.1 L482.1 229.3 L483.3 229.6 L484.4 229.3 L485.5 229.5 L486.6 229.5 L487.8 229.2 L488.9 229.5 L490.2 230 L491.6 230.4 L492.7 229.7 L493.8 229 L494.9 228.3 L496 228.1 L497 228.2 L498 229.1 L499 228.9 L500 229.3 L501 229.6 L502 230.1 L503 230 L504.1 229.9 L505.3 229.8 L506.4 229.8 L507.5 229.7 L508.6 230.2 L509.8 230.2 L510.9 229.8 L511.9 229 L513 228.5 L514 228.1 L515 227.5 L516.1 227 L517.1 226.3 L518.1 226.1 L519.2 225.9 L520.2 226.1 L521.3 225.9 L522.3 226.3 L523.4 226.7 L524.4 226.6 L525.5 227 L526.5 227.9 L527.6 228.1 L528.7 228.1 L529.7 228.8 L530.8 228.7 L531.8 229.2 L532.9 229.1 L534 229.2 L535 229.9 L536.1 230.6 L537.1 230.4 L538.2 231.2 L539.2 231.8 L540.3 231.2 L541.4 231.9 L542.4 232.2 L543.5 232.2 L544.5 231.9 L545.6 231.9 L546.6 232.4 L547.7 232.9 L548.7 232.7 L549.8 232.1 L550.9 232.3 L552 231.3 L553.1 231.2 L554.2 231.6 L555.3 230.8 L556.4 231 L557.5 231.2 L558.6 232.1 L559.7 232.6 L560.8 233.3 L561.9 233.5 L563 233.6 L564 233.3 L565.1 233.1 L566.1 232.4 L567.2 232.5 L568.3 232.9 L569.4 233 L570.5 234 L571.6 234.2 L572.7 234 L573.8 233.2 L574.9 232.7 L576 232.7 L577.1 233.6 L578.1 234 L579.2 234.3 L580.3 234.8 L581.4 234.8 L582.4 235.1 L583.5 234.8 L584.5 234.7 L585.6 234.8 L586.7 235.1 L587.8 235.5 L588.9 235.7 L590 236.7 L591.1 236.9 L592.2 237.5 L593.3 237.5 L594.4 238.3 L595.5 238.1 L596.5 237.8 L597.6 237.7 L598.6 237.7 L599.7 237.8 L600.8 237.8 L601.9 237.1 L603 236.7 L604.1 236.5 L605.2 236.6 L606.3 236.3 L607.4 236.1 L608.5 236.5 L609.5 236.3 L610.5 236 L611.5 235.9 L612.6 235.5 L613.6 235.5 L614.6 235.1 L615.6 235.5 L616.7 235.2 L617.7 235.6 L618.7 235.8 L619.8 235.8 L620.8 236.2 L621.8 236.2 L622.9 236.4 L624 236.8 L625 236.5 L626.1 237.1 L627.1 236.7 L628.2 237.2 L629.2 236.8 L630.3 237.4 L631.3 236.7 L632.3 236.8 L633.3 236.8 L634.3 235.8 L635.3 236 L636.3 235.8 L637.3 235.1 L638.3 234.9 L639.4 235.2 L640.4 235.3 L641.4 234.8 L642.5 235 L643.5 234.8 L644.5 235.4 L645.6 235.7 L646.6 236.4 L647.7 236.8 L648.7 236.9 L649.8 237.6 L650.9 237.5 L652 237.4 L653.1 237.9 L654.1 237 L655.2 236.3 L656.2 236 L657.2 235.5 L658.3 234.2 L659.3 233.9 L660.3 233.8 L661.3 233.6 L662.3 233.1 L663.4 233 L664.4 232.4 L665.4 232.5 L666.4 232.4 L667.4 231.5 L668.4 232 L669.5 231.6 L670.5 231.1 L671.5 230.5 L672.5 230.4 L673.6 230.8 L674.7 231 L675.8 230.3 L676.9 230.7 L678.2 231.6 L679.5 232.1 L680.7 232.2 L681.8 231.9 L683 231.6 L684.2 232.2 L685.3 232.5 L686.5 233 L687.7 233.5 L688.8 233.7 L690 233.4 L691.2 234.2 L692.4 235.4 L693.6 236 L694.6 236 L695.7 235.8 L696.7 236 L697.8 235.8 L698.8 236.2 L699.8 236.3 L700.8 236.5 L701.8 234.7 L702.9 235.2 L703.9 234.6 L704.9 233.8 L705.9 234.2 L706.9 233.6 L707.9 233.3 L708.9 234 L709.9 232.5 L710.9 232.6 L711.9 232.8 L712.9 232.7 L714.2 230.7 L715.5 230.4 L717.3 226.9 L718.4 226.2 L719.4 225.3 L720.5 224.9 L721.5 222.9 L722.6 222.5 L724.3 225.1 L725.6 225.4 L727 226.5 L728 225.8 L729.1 224.6 L730.1 224.4 L731.2 223.1 L732.2 222.8 L733.4 221.4 L734.5 219.8 L735.7 217.5 L736.9 216.8 L738.1 215.8 L739.3 213.7 L740.4 213.9 L741.5 213.8 L742.6 214.6 L743.7 214 L744.8 215.5 L745.9 216.2 L746.9 216.9 L748 218.1 L749.4 218.9 L750.7 220.4 L751.8 220.1 L752.9 221.7 L754 220.8 L755.1 221.9 L756.2 221.8 L757.3 220.9 L758.4 221.2 L759.5 219.8 L760.7 219.1 L761.8 218.3 L763 216.3 L764 213.9 L765.1 212.8 L766.5 215.4 L767.6 213.7 L768.7 212 L769.8 209.8 L770.9 208.4 L772 207.7 L773 206.7 L774.1 206.4 L775.1 204.7 L776.2 204.9 L777.5 205.8 L778.8 207 L779.9 206.3 L780.9 205.4 L782 205 L783 205.1 L784.1 204 L785.4 204.8 L786.7 204.9 L787.8 203.2 L788.8 201.8 L789.9 199.6 L790.9 197.6 L792 196.4 L793.2 196.2 L794.3 197.3 L795.5 198.4 L796.8 198.1 L798.1 197.5 L799.5 199.7 L800.8 200.5 L801.8 201.1 L802.9 200.5 L804 201.4 L805 200.5 L806 201.3 L807.1 202.8 L808.1 203.1 L809.3 201.8 L810.4 201.2 L811.6 199.6 L812.9 200.5 L814.2 199.6 L815.5 200.8 L816.9 202.8 L818 202.3 L819 203.2 L820.1 203.1 L821.2 203.1 L822.3 202.3 L823.3 201.2 L824.4 201.3 L825.4 200.9 L826.5 200.5 L827.9 201.2 L829.2 202.2 L830.4 202 L831.5 200.6 L832.7 199.6 L833.8 201.3 L834.9 203 L836 204 L837.1 204.9 L838.1 204.2 L839.2 203.9 L840.2 203.1 L841.3 202.4 L842.3 201.4 L843.3 201 L844.4 199.9 L845.4 199.7 L846.4 199 L847.5 198.9 L848.5 197.5 L849.8 200.4 L851.1 202.2 L852.3 203.1 L853.4 203.3 L854.6 203.1 L855.7 202.8 L856.8 201.5 L857.9 200.2 L859 199.6 L860.1 199.3 L861.2 200.2 L862.3 200.6 L863.4 200 L864.5 199.8 L865.6 198.7 L866.7 199.6 L867.8 198.7 L869 197.9 L870.1 197.1 L871.3 196.4 L872.6 196.6 L874 198.4 L875.1 198.1 L876.2 198.1 L877.3 197.2 L878.4 197 L879.4 196.1 L880.5 196.1 L881.5 194.3 L882.6 194.6 L883.6 194 L885.4 195.7 L886.7 195.2 L888 193.1 L889.1 194.2 L890.2 194.4 L891.3 195.7 L892.4 196.1 L893.6 194.9 L894.7 192.8 L895.9 192 L897.2 192.2 L898.6 193.5 L899.8 194.4 L900.9 193.4 L902.1 194 L903.4 191.8 L904.7 191.2 L905.8 191.5 L906.9 190.6 L908 190 L909.1 189.9 L910.3 188 L911.4 186.5 L912.6 184.1 L914 182.7 L915.3 182.4 L916.5 184 L917.6 185.5 L918.8 186.4 L920.1 187.4 L921.4 187.3 L922.6 188.4 L923.8 190.4 L925 191.7 L926 191.1 L927 191.6 L928 190.9 L929.1 191.9 L930.1 191.9 L931.1 191.2 L932.3 191.7 L933.4 192.2 L934.6 193.5" stroke="#0d0d0d" stroke-width="1"/>
<path d="M88.9 219.5 L90 220 L91.1 219.8 L92.2 218.4 L93.3 218.3 L94.4 219.2 L95.5 218.6 L96.7 219 L97.9 219 L99.1 218.9 L100.2 218.1 L101.3 218 L102.4 217.5 L103.5 216.8 L104.8 217.7 L106.1 218.4 L107.4 217.5 L108.7 217.5 L109.7 217.8 L110.8 218.1 L111.8 219 L112.8 219.7 L113.9 220 L114.9 219.8 L116.1 219.5 L117.2 218.9 L118.4 218.6 L119.6 218.4 L120.7 218.2 L121.9 218.9 L123 217.8 L124 218 L125.1 217.4 L126.1 217.1 L127.2 216.8 L128.3 217.4 L129.3 217 L130.4 217.1 L131.4 216.8 L132.5 217.2 L133.6 216.5 L134.6 216.8 L135.7 216.5 L136.7 217 L137.8 217.6 L138.8 217.1 L139.8 216.3 L140.9 216.7 L142.1 227.7 L143.9 234.8 L145.1 236.2 L146.2 236.9 L147.4 237.4 L148.7 237.5 L150 237 L151.1 238.2 L152.1 238.7 L153.2 239.4 L154.2 239.5 L155.3 240.4 L156.4 241.4 L157.4 241.6 L158.5 240.8 L159.5 241.9 L160.6 241.8 L161.7 241.9 L162.8 241.3 L163.9 241.2 L165 240.9 L166.1 241.3 L167.2 240.5 L168.3 240.7 L169.4 240 L170.5 239.8 L171.5 240.6 L172.6 240.7 L173.6 240.1 L174.7 240.3 L175.7 240.8 L176.8 240.6 L177.8 240.3 L178.8 240 L179.9 240.4 L180.9 240.3 L181.9 241 L182.9 240.4 L183.9 241.5 L184.9 240.8 L185.9 241.8 L186.9 241.4 L187.9 241.2 L188.9 242.2 L189.9 242 L191 241.8 L192 241.9 L193 242.2 L194 242.1 L195.1 242.1 L196.1 241.5 L197.2 241.2 L198.2 241.5 L199.3 241.3 L200.4 242 L201.5 241.7 L202.6 241 L203.7 242.1 L204.7 242.1 L205.8 242.5 L206.9 241.6 L208 242.1 L209.1 242.4 L210.1 241.3 L211.2 242.1 L212.2 241.5 L213.3 241.4 L214.4 242.2 L215.4 241.1 L216.5 241.6 L217.5 242 L218.6 241.4 L219.7 240.8 L220.8 240.5 L221.9 241.2 L223 240.3 L224.1 240.5 L225.2 239.3 L226.3 239.5 L227.4 239.5 L228.5 239 L229.6 239.7 L230.7 238.9 L231.8 240.1 L232.9 238.8 L234 239.8 L235.1 238.8 L236.2 239.5 L237.2 239.6 L238.2 240.9 L239.2 240.4 L240.2 240.9 L241.2 242.1 L242.2 242.1 L243.2 242.7 L244.2 242.4 L245.3 244.1 L246.3 243.3 L247.4 243.5 L248.4 244.2 L249.5 245 L250.5 245.5 L251.6 245 L252.6 245.6 L253.7 246.2 L254.8 245.3 L255.9 245.7 L257 245.9 L258.1 245.3 L259.2 246 L260.4 246.6 L261.6 246.7 L262.7 247.2 L263.9 247.3 L265 247.4 L266.2 247.3 L267.3 246.8 L268.5 247.1 L269.6 246.9 L270.7 246 L271.7 245.2 L272.8 245.3 L273.9 245.5 L275 244 L276 244.2 L277.1 243.5 L278.2 243.2 L279.2 243.6 L280.2 243.4 L281.2 244.9 L282.3 244.3 L283.3 245.1 L284.3 245.3 L285.5 246.2 L286.7 246.6 L287.9 248.3 L288.9 248.5 L289.9 248.1 L290.9 248.2 L291.9 248.3 L292.9 248.6 L293.9 248.7 L294.9 249.4 L295.9 249.6 L297 249.4 L298 250 L299 249.9 L300.1 250 L301.1 248.9 L302.2 249.2 L303.2 248.9 L304.2 249.4 L305.3 249.4 L306.3 249.2 L307.4 249.1 L308.5 248.4 L309.6 247.3 L310.7 247.1 L311.8 247.3 L312.8 247.8 L313.9 247.4 L314.9 247.8 L316 248.8 L317.1 248.3 L318.3 247.6 L319.4 248.1 L320.5 247.1 L321.6 246.6 L322.8 246.4 L323.9 246.5 L325 246.2 L326.1 246.3 L327.1 246.9 L328.2 246.9 L329.3 246.8 L330.4 247.4 L331.4 247 L332.5 248 L333.6 247.6 L334.7 248.2 L335.7 247.7 L336.8 247.2 L337.8 247.3 L338.9 247.3 L339.9 246.4 L341 246.9 L342 246.9 L343.1 246.3 L344.1 246.7 L345.1 246.1 L346.2 247.1 L347.2 246.5 L348.2 246.7 L349.2 247.2 L350.2 246.8 L351.3 246.3 L352.3 247.2 L353.3 246.4 L354.3 245.9 L355.4 246.8 L356.4 246.5 L357.4 245.9 L358.4 246.2 L359.4 247 L360.5 246.7 L361.5 245.8 L362.5 246.4 L363.5 246.3 L364.5 246.4 L365.5 246 L366.6 246.5 L367.6 245.8 L368.6 246.1 L369.6 246.4 L370.7 246.6 L371.8 247.8 L372.9 246.9 L374 247.9 L375.1 248.2 L376.2 247.3 L377.3 247.8 L378.4 247.6 L379.5 247.7 L380.7 248.1 L381.8 248.7 L382.9 248.5 L384 248.4 L385.2 248.6 L386.3 249.4 L387.4 248.9 L388.5 250 L389.6 249.7 L390.7 250.2 L391.8 249.9 L392.9 249 L394 249.9 L395.1 249.7 L396.2 249.9 L397.3 249.6 L398.4 249 L399.5 248.8 L400.5 248.8 L401.5 249.2 L402.6 249.9 L403.6 249.4 L404.6 250 L405.6 250.2 L406.7 250.1 L407.7 250.8 L408.8 250.6 L409.8 250.7 L410.9 250.1 L412.1 250.3 L413.2 249.2 L414.4 249.2 L415.5 248.9 L416.6 249.4 L417.7 249.2 L418.8 249.7 L419.8 249.9 L420.9 250.6 L421.9 251.2 L422.9 251 L424 251.6 L425 251.5 L426 250.9 L427.1 251.3 L428.1 252.2 L429.2 251 L430.2 251.5 L431.3 251.6 L432.4 251.2 L433.5 251.4 L434.6 252.8 L435.7 253.1 L436.8 252.8 L437.9 252.2 L439 252.9 L440 252.5 L441 252.2 L442 252.7 L443 252.6 L444 252.1 L445 252 L446.1 252 L447.2 251.5 L448.2 252.1 L449.3 252.6 L450.4 252.4 L451.5 251.4 L452.5 252 L453.6 252.3 L454.7 252 L455.8 252.4 L456.9 254.1 L458 254.2 L459.1 255 L460.1 255.1 L461.2 254.5 L462.2 255.2 L463.3 254.7 L464.3 254.1 L465.4 253.8 L466.4 252.9 L467.5 252.9 L468.5 252 L469.6 252.3 L470.9 253.5 L472.2 254.5 L473.4 255.3 L474.6 254.6 L475.8 255.3 L476.8 255.2 L477.8 255 L478.9 254.8 L479.9 255.1 L480.9 255.2 L481.9 254.5 L482.9 254.9 L483.9 254.6 L484.9 255.4 L485.9 254.5 L486.9 255.2 L487.9 255.2 L488.9 255 L489.9 255.2 L490.9 255.2 L491.9 254.2 L493 254.7 L494 254.2 L495 254.5 L496 254.1 L497.1 254.8 L498.1 254.3 L499.2 253.5 L500.2 254.2 L501.3 254.5 L502.3 254.8 L503.4 254.5 L504.4 254.8 L505.5 253.7 L506.5 255 L507.6 254.7 L508.6 254.6 L509.7 255 L510.7 255 L511.8 254.5 L512.9 253.4 L514 253.8 L515.1 253.2 L516.2 252.3 L517.3 252.3 L518.4 253.5 L519.5 253.8 L520.6 254.1 L521.8 253.5 L522.9 254.2 L524.1 253.6 L525.1 253.3 L526.1 254.2 L527.1 254.2 L528.1 254.2 L529.1 254.9 L530.1 255 L531.1 255.3 L532.2 255 L533.3 256.1 L534.4 254.9 L535.5 254.9 L536.6 255.7 L537.7 256.2 L538.8 256 L539.9 255.9 L540.9 256.1 L541.9 255.6 L542.9 255.8 L544 255.2 L545 254.9 L546 255.1 L547 255 L548 253.9 L549.1 253.5 L550.1 254 L551.2 252.7 L552.2 252.7 L553.3 253 L554.4 252.9 L555.5 252.3 L556.6 252.3 L557.7 253 L558.8 253.6 L559.9 254.2 L561 254.1 L562 253.3 L563 253.1 L564 253.2 L565 253 L566 252.5 L567 251.9 L568 252.3 L569.2 252.4 L570.4 253 L571.6 252.3 L572.7 251.7 L573.8 251.5 L574.9 250.9 L576 250.6 L577.2 251.3 L578.3 252.7 L579.5 252.9 L580.5 252.4 L581.6 252.5 L582.6 252 L583.7 251.8 L584.7 251.5 L585.9 252.5 L587.1 251.8 L588.3 252.9 L589.3 253.2 L590.3 252.3 L591.3 252.7 L592.4 252.7 L593.4 252.4 L594.4 252 L595.5 251.5 L596.6 251.8 L597.7 250.4 L598.8 250.8 L599.9 250.1 L601 249.9 L602.1 250 L603.2 249.2 L604.2 249.3 L605.2 248.8 L606.2 248 L607.2 247.6 L608.2 247.6 L609.2 247 L610.2 247.1 L611.3 246.6 L612.4 247.3 L613.5 245.9 L614.6 246.2 L615.7 246.9 L616.8 246.5 L617.9 246.7 L619 247.1 L620 246.9 L621 246.6 L622 247.2 L623 246.8 L624 247.3 L625 247.4 L626.1 247.1 L627.1 248 L628.2 248.1 L629.2 247.5 L630.3 247.6 L631.3 247.6 L632.3 247.8 L633.3 246.8 L634.3 246.2 L635.3 246.2 L636.3 246 L637.3 246.2 L638.3 246.4 L639.4 246 L640.4 246 L641.4 246.6 L642.5 245.8 L643.5 246.2 L644.5 247.2 L645.6 247.4 L646.6 247.6 L647.7 248.7 L648.7 248.8 L649.8 248.7 L650.9 249.5 L652 249.7 L653.1 249.2 L654.2 248.5 L655.2 248.1 L656.3 247.8 L657.3 246.8 L658.4 245.8 L659.4 246.1 L660.4 246.2 L661.4 246.2 L662.4 245.9 L663.4 246.1 L664.4 245.1 L665.4 245.3 L666.4 245.3 L667.5 245.2 L668.5 244.7 L669.5 244.6 L670.6 244.1 L671.6 244.4 L672.6 245.2 L673.6 244.5 L674.7 244.8 L675.7 245.6 L676.7 244.7 L677.7 245.3 L678.7 246.1 L679.7 245.2 L680.7 245.2 L681.8 245.9 L682.8 246.1 L683.8 247.1 L684.8 246.7 L686 246.9 L687.1 246.5 L688.3 245.8 L689.5 246.5 L690.6 247.5 L691.8 248.3 L692.8 247.8 L693.8 248.5 L694.8 247.8 L695.8 247.5 L696.8 247.9 L697.8 247 L698.8 247.4 L699.8 247 L700.8 248.1 L701.8 245.9 L702.9 245.9 L703.9 245.8 L704.9 245.8 L705.9 246.2 L706.9 245.8 L707.9 245.3 L708.9 245.3 L709.9 244.9 L710.9 244.7 L711.9 245.4 L712.9 245 L714.1 243.1 L715.2 241.8 L716.4 240.6 L717.5 241.3 L718.5 239.7 L719.6 239.9 L720.6 241.7 L721.7 240.9 L722.9 242.5 L724 245.1 L725.2 246.2 L726.4 245.5 L727.5 246.6 L728.7 246.7 L730 246.8 L731.3 245.3 L732.5 243.7 L733.7 243.6 L734.9 241.8 L735.9 242.1 L736.9 241.7 L738 243.2 L739 241.9 L740 242.2 L741 242.3 L742.1 242.5 L743.1 241.7 L744.2 242.8 L745.2 242.1 L746.3 241.8 L747.4 242.4 L748.4 242.6 L749.5 244 L750.5 244.4 L751.6 243.6 L752.6 244.1 L753.7 242.8 L754.7 242.3 L755.8 242.2 L756.8 241.8 L757.9 240.4 L758.9 240.1 L760 241.9 L761 239.5 L762.1 240 L763.4 239.3 L764.7 236.5 L766.5 240.9 L767.6 240.7 L768.7 240.6 L769.8 237.9 L770.9 238.3 L772.2 239.1 L773.5 240.9 L774.9 241.4 L776.2 240.4 L777.9 245.3 L779.1 244.7 L780.2 245.6 L781.4 247.1 L782.5 247.1 L783.6 247 L784.7 247.3 L785.8 248.5 L786.9 248.1 L787.9 245.9 L789 247.2 L790 245.6 L791.1 244.4 L792.9 246.2 L793.9 244.2 L795 245.2 L796 242.7 L797.1 242.3 L798.1 241.4 L799.2 241.4 L800.3 240.3 L801.4 241 L802.5 240.9 L803.8 240.7 L805 242.7 L806.3 241.4 L807.6 242.5 L808.9 240.9 L810.1 240.9 L811.3 239.4 L812.5 238.6 L813.8 240.8 L815.1 242.1 L816.1 242.7 L817.1 240.5 L818.2 241 L819.2 239.8 L820.2 239.4 L821.2 240 L822.3 238.6 L823.4 238.5 L824.5 237.7 L825.6 238.3 L826.7 237.2 L827.7 237.1 L828.8 237.2 L829.8 237.3 L830.9 236 L832 237.4 L833.1 237.4 L834.2 237.4 L835.3 237.8 L836.3 238.5 L837.3 236.4 L838.3 235.9 L839.3 237.3 L840.3 236.5 L841.3 235.2 L842.3 235.6 L843.4 235.1 L844.4 234.8 L845.5 235 L846.5 234.8 L847.6 234.8 L849 236.8 L850.3 239.2 L851.3 239.3 L852.3 238.6 L853.3 237.4 L854.4 236.5 L855.4 235.4 L856.4 235.3 L857.5 236.5 L858.6 237.5 L859.7 236.2 L860.8 237.4 L862 237.7 L863.1 237.5 L864.3 236.9 L865.5 238.1 L866.6 237.5 L867.8 239.5 L868.9 239.5 L870 238.6 L871.1 238.5 L872.2 239.2 L873.4 239.8 L874.5 240.3 L875.7 240.4 L876.7 240.3 L877.7 240.3 L878.7 239.8 L879.8 238.9 L880.8 237.5 L881.8 238.9 L882.8 237.9 L884.5 240 L885.7 240.5 L886.8 240.3 L888 239.2 L889.1 239.9 L890.2 238.9 L891.3 239.7 L892.4 240.9 L893.8 238.8 L895.1 238.6 L896.3 240 L897.4 240.8 L898.6 241.8 L899.8 242.2 L900.9 245.2 L902.1 245.3 L903.9 244.4 L905.6 249.2 L907 251 L908.3 250.6 L909.5 248.6 L910.6 244.6 L911.8 241.8 L913.1 240.6 L914.4 240.4 L915.4 239.2 L916.5 240.2 L917.5 239.4 L918.5 237.9 L919.6 238.9 L920.6 237.4 L921.9 240.7 L923.2 243.6 L924.4 243.7 L925.5 243.9 L926.7 244.4 L927.9 245.1 L929 244.7 L930.2 245 L931.3 244.9 L932.4 243.1 L933.5 244 L934.6 243" stroke="#ff0a0a" stroke-width="1"/>
<path d="M88.9 305.5 L90.1 304.8 L91.2 304.7 L92.4 304.1 L93.5 303.9 L94.7 303.4 L95.7 303.2 L96.7 302.4 L97.7 302 L98.7 302.4 L99.7 301.5 L100.7 301.2 L101.7 301.1 L102.9 303 L104 304 L105.2 305.5 L106.6 304.8 L107.9 303.4 L109 303.4 L110.1 303.5 L111.1 303.1 L112.2 303.4 L113.3 302.3 L114.4 301.2 L115.5 299.7 L116.6 298.4 L117.7 297.7 L118.8 296.8 L119.9 295.4 L121 294.9 L122.2 293.8 L123.4 292.3 L124.6 290.9 L125.6 290.5 L126.6 289.9 L127.6 290.4 L128.7 289.8 L129.7 289.8 L130.7 289.3 L131.8 289 L132.8 288.2 L133.9 287.8 L134.9 286.6 L136 286.1 L137.2 286.1 L138.3 285.6 L139.5 285.8 L140.7 285.2 L142.1 296.7 L143.9 308.1 L145.2 310.2 L146.5 311.6 L147.6 311.5 L148.6 311.8 L149.7 312.1 L150.7 313 L151.8 312.8 L152.9 313.1 L154 313.6 L155.1 313.7 L156.2 314.2 L157.3 314 L158.4 313.7 L159.5 313.5 L160.6 313.4 L161.6 312.7 L162.6 311.9 L163.6 311.4 L164.7 310.4 L165.7 309.8 L166.7 308.6 L167.8 308.7 L169 308.6 L170.1 308.2 L171.2 307.5 L172.3 307.9 L173.5 307.8 L174.6 307.2 L175.6 307.4 L176.6 306.9 L177.6 306.9 L178.6 306.2 L179.6 306.6 L180.6 306.2 L181.6 305.8 L182.6 305.8 L183.9 306.1 L185.2 307.2 L186.2 307.6 L187.2 307.8 L188.2 307.1 L189.3 307.8 L190.3 307.5 L191.3 307.7 L192.4 306.8 L193.5 306.4 L194.6 306.3 L195.7 305.5 L196.8 305.9 L197.9 305.3 L199 305.9 L200.1 305.5 L201.2 306.2 L202.3 305.9 L203.4 306.5 L204.5 306.3 L205.6 306.2 L206.6 305.1 L207.7 305 L208.7 303.8 L209.8 303.4 L210.9 302.6 L211.9 302.7 L213 301.8 L214 301.5 L215.1 301.4 L216.2 301.2 L217.3 301.3 L218.4 300.9 L219.5 301.1 L220.7 299.7 L221.8 299.4 L223 298.1 L224.3 297.9 L225.6 298.1 L226.7 297.8 L227.9 297.1 L229 295.9 L230.1 295.3 L231.2 294.6 L232.4 294 L233.5 293.2 L234.5 293.9 L235.6 294.4 L236.6 295.1 L237.6 295.9 L238.7 296.1 L239.7 296.7 L240.8 297.6 L241.9 298.8 L242.9 299.3 L244 300.3 L245.1 301.8 L246.2 302.3 L247.2 303.3 L248.3 303.7 L249.4 305.1 L250.5 305.1 L251.6 305.3 L252.7 304.8 L253.8 305.4 L254.8 305.5 L255.9 305 L257 305.6 L258.1 305.5 L259.3 306.3 L260.5 307.4 L261.7 308.1 L262.8 307.6 L263.9 307.5 L265 306.9 L266 306.6 L267.1 305.5 L268.1 305.1 L269.1 305.2 L270.2 305 L271.2 304.1 L272.2 302.7 L273.2 301.7 L274.2 300.6 L275.2 299.2 L276.2 298 L277.2 296.8 L278.2 295.8 L279.3 296.8 L280.4 298.1 L281.5 298.9 L282.6 300.2 L283.7 301.4 L284.8 303.1 L285.9 303.7 L287 305.5 L288.1 305.3 L289.1 305.2 L290.2 304.6 L291.3 304.3 L292.3 304.6 L293.4 303.9 L294.5 303.6 L295.5 303.6 L296.6 303.4 L297.7 303.5 L298.8 302.9 L299.8 303 L300.9 303 L302 303.4 L303.1 302.9 L304.1 303.3 L305.2 302.6 L306.3 302.8 L307.6 301.5 L308.9 300.6 L310.2 299.3 L311.4 300.7 L312.6 301.3 L313.9 302.1 L315.1 303.4 L316.3 302.1 L317.4 301.5 L318.6 300.5 L319.8 297.5 L320.9 295.3 L322.1 292.3 L323.3 291.7 L324.4 290.2 L325.6 289.6 L326.7 289.4 L327.8 289.8 L328.8 289.6 L329.9 289.7 L331 289.3 L332.1 289.1 L333.1 289.2 L334.2 289.6 L335.3 289.3 L336.3 289.1 L337.4 289.1 L338.4 289.1 L339.4 289.1 L340.5 289.1 L341.5 289.1 L342.6 288.7 L343.7 287.1 L344.8 286.2 L345.9 285.8 L346.9 285.9 L347.9 285.6 L348.9 285.5 L349.9 284.7 L350.9 284.9 L351.9 284.6 L352.9 284 L354 283.2 L355 283.1 L356.1 282.6 L357.1 281.9 L358.2 281.2 L359.2 280.8 L360.3 280.2 L361.3 279.8 L362.4 279.3 L363.4 279.1 L364.4 278.1 L365.5 277.9 L366.5 277 L367.5 276.8 L368.6 275.4 L369.6 275.2 L370.7 275.8 L371.7 275.9 L372.8 276.4 L373.8 276.6 L374.9 276.5 L376 277.6 L377.2 278 L378.3 278.2 L379.4 279.5 L380.5 279.7 L381.7 280.5 L382.8 281.4 L383.8 281.4 L384.8 281.1 L385.8 280.9 L386.8 281.2 L387.8 280.7 L388.8 280.3 L389.8 280.3 L390.9 280.8 L391.9 282.1 L393 282.5 L394 283.5 L395.1 284 L396.2 284.2 L397.3 284.3 L398.4 284.9 L399.5 285.2 L400.8 286.6 L402.1 287.4 L403.2 286.9 L404.3 287.3 L405.4 287.3 L406.5 287 L407.6 286.9 L408.7 286 L409.8 286.4 L410.9 286.1 L411.9 286.8 L412.9 286.5 L413.9 287 L415 287.4 L416 288 L417 288.4 L418.1 288.3 L419.2 288.4 L420.3 288.6 L421.4 288.4 L422.4 287.3 L423.4 286.6 L424.4 286 L425.5 285.3 L426.5 284.5 L427.5 284.6 L428.5 283.5 L429.5 283.8 L430.5 283.1 L431.6 283.5 L432.6 283.3 L433.6 283.3 L434.6 283.5 L435.7 284.2 L436.7 285.4 L437.8 286.2 L438.8 286.9 L439.9 287.9 L440.9 288 L441.9 288.4 L443 288.6 L444 289.3 L445 289.6 L446 289.9 L447 289.7 L448 289.6 L449 289.8 L450 290.1 L451 290.5 L452 290.5 L453.1 291.6 L454.2 292 L455.3 293.2 L456.4 293.7 L457.5 293.1 L458.6 292.3 L459.7 291.6 L460.8 291 L461.8 290.8 L462.9 290.7 L463.9 290.2 L464.9 290.2 L466 289.8 L467 289.6 L468 290.3 L469 291.4 L470 292.5 L471 293.2 L472.1 291.9 L473.2 291.4 L474.4 290.5 L475.5 290 L476.6 288.8 L477.7 289.7 L478.7 289.7 L479.8 290.7 L480.8 291.1 L481.9 291.4 L483 291 L484.1 291 L485.1 290.5 L486.2 290.9 L487.3 290.5 L488.4 290.5 L489.4 290.3 L490.5 290 L491.6 289.6 L492.6 290.2 L493.6 290.4 L494.6 290.4 L495.6 291.2 L496.6 291.1 L497.6 291.6 L498.6 292.3 L499.7 291.9 L500.7 290.7 L501.8 290.1 L502.8 289.5 L503.9 289.3 L504.9 289.8 L506 289.3 L507 289.2 L508.1 290.1 L509.1 289.6 L510.2 290.3 L511.2 290.3 L512.3 290.6 L513.4 290.8 L514.4 290.5 L515.4 291.3 L516.5 292.2 L517.5 292.3 L518.5 293.7 L519.6 294.2 L520.6 294.9 L521.7 294.9 L522.8 294.1 L523.9 294.4 L525 294 L526 294.1 L527 293 L528 293 L529.1 292.9 L530.1 292.9 L531.1 292.3 L532.2 291.8 L533.2 291.5 L534.3 291.2 L535.3 291.3 L536.4 290.9 L537.4 290.6 L538.4 289.7 L539.4 289.1 L540.4 288.6 L541.4 288 L542.4 287.5 L543.4 287 L544.4 286.2 L545.4 286.1 L546.4 286.1 L547.5 285.2 L548.5 285.1 L549.5 284.1 L550.5 284 L551.6 284.2 L552.7 284.3 L553.8 284.3 L554.9 284.2 L556 284.2 L557.1 284.4 L558.2 284.7 L559.3 284.4 L560.5 283 L561.6 281.9 L562.8 281.2 L563.8 281.5 L564.9 281.8 L565.9 281.5 L567 281.5 L568 281.7 L569 281.3 L570 280.2 L571 279.6 L572.1 278.9 L573.1 278.6 L574.1 277.8 L575.1 277.3 L576.4 278.1 L577.7 279.4 L578.7 279.1 L579.8 278.8 L580.8 277.8 L581.8 277.7 L582.9 276.9 L583.9 276.5 L585.2 277.4 L586.5 277.7 L587.6 276.8 L588.7 275.5 L589.8 274.5 L590.9 273.8 L591.9 272.7 L592.9 272.5 L594 271.8 L595 271 L596 270.5 L597 270 L598 269.6 L599.1 269.7 L600.1 268.9 L601.1 269.4 L602.2 268.7 L603.2 268.5 L604.2 268.2 L605.3 267.8 L606.3 267.8 L607.3 267.4 L608.4 266.8 L609.4 266.4 L610.4 266.5 L611.4 266.8 L612.5 267.1 L613.5 266.8 L614.5 267.2 L615.5 267.1 L616.6 267.3 L617.6 266.6 L618.7 266.1 L619.7 265.9 L620.8 265.9 L621.8 266.1 L622.9 266.1 L624 266.3 L625 265.9 L626 266 L627 265.3 L628 265 L629 264.9 L630 264.6 L631 264.9 L632 264.5 L633.1 265.2 L634.3 265.6 L635.4 265.4 L636.5 266.3 L637.6 266.2 L638.8 266.7 L639.9 267.1 L640.9 267.5 L641.9 267.1 L642.9 267.3 L643.9 268.1 L644.9 267.8 L645.9 268 L646.9 268.4 L647.9 268.5 L649.6 266.4 L650.7 266.4 L651.7 265.6 L652.8 265.7 L653.8 265.5 L654.9 265.4 L655.9 265.9 L656.9 266.1 L657.9 267 L658.9 267.8 L659.9 267.8 L660.9 268.4 L661.9 268.9 L662.9 268.8 L663.9 269.1 L664.9 269.6 L665.9 269.4 L666.9 270.2 L667.9 270.5 L668.9 270.3 L670 270.3 L671.1 271.4 L672.2 271.3 L673.3 272 L674.4 272.4 L675.5 272.4 L676.6 273.1 L677.7 273.3 L678.9 272.6 L680 271.8 L681.2 270.7 L682.3 270.6 L683.4 271.2 L684.5 271.5 L685.6 271.2 L686.8 271 L688 270.4 L689.2 270 L690.2 268.5 L691.3 269.1 L692.3 268.2 L693.4 268.7 L694.4 267.7 L695.5 267.8 L696.6 267.2 L697.7 265.8 L698.8 266.3 L699.8 266.9 L700.8 267 L701.8 266.1 L702.9 268.1 L703.9 267.7 L704.9 266.5 L705.9 267.7 L706.9 269.1 L707.9 267.3 L709 268.1 L710 269.4 L711 269.4 L712 269.4 L713.1 269.4 L714.2 269.5 L715.3 268.9 L716.4 268.9 L717.5 270.3 L718.6 271.9 L719.7 273.5 L720.8 276.5 L722.1 280.1 L723.4 282.6 L724.6 282.7 L725.8 281.6 L727 280.9 L728.1 282.8 L729.1 283.1 L730.2 284.2 L731.3 286.1 L733.1 284.7 L734.2 286.3 L735.3 289.5 L736.4 289.2 L737.5 292.3 L738.6 293.6 L739.6 294.2 L740.7 296.1 L742 296.1 L743.2 294.3 L744.5 294 L745.5 292.2 L746.6 291 L747.6 290 L748.6 289.2 L749.7 286.8 L750.7 285.8 L752.4 287 L753.5 287 L754.5 284.2 L755.6 283.8 L756.6 282.4 L757.7 282.6 L758.7 282.1 L759.8 284.4 L760.8 284.8 L761.8 283.9 L762.9 284.5 L763.9 285.8 L765.6 291.7 L767.4 290.5 L768.6 293 L769.7 296.7 L770.9 298.8 L772 300.8 L773 301.8 L774.1 302.5 L775.1 302.5 L776.2 304.6 L777 311.6 L778.1 312 L779.2 312.1 L780.3 313.6 L781.4 314.2 L782.5 315.5 L783.6 315.6 L784.7 316.9 L785.8 318.6 L787.6 316.9 L788.8 318.6 L789.9 317.7 L791.1 319.9 L792.2 323.1 L793.2 324.8 L794.2 323.5 L795.3 321.4 L796.4 317.7 L797.4 315.7 L799.2 318.6 L800.5 315.7 L801.8 312.5 L803 313.6 L804.2 314.6 L805.4 315.1 L806.6 314.8 L807.7 312.5 L808.9 310.4 L810.2 310.9 L811.6 312.5 L812.9 312.1 L814.2 309.9 L815.1 313.9 L816.9 308.6 L817.9 308 L818.9 307.7 L819.9 307.5 L820.9 305 L821.9 306.4 L822.9 305.6 L823.9 304.6 L825.1 306 L826.2 307.6 L827.4 309 L829.2 304.6 L830.3 305.1 L831.4 305.1 L832.5 306.6 L833.6 307.2 L834.7 304.3 L835.8 303.9 L836.8 302.6 L837.9 300.5 L839 301.3 L840 302.5 L841.1 304.5 L842.1 305.2 L843.2 305.1 L844.5 303.9 L845.9 304.6 L847 307 L848.1 308.3 L849.2 308.5 L850.3 311.3 L852 305.1 L853.1 304.3 L854.2 303.6 L855.3 302.7 L856.4 303.4 L857.7 305.7 L859 307.7 L860.1 308.9 L861.1 307.4 L862.2 308.9 L863.2 308.5 L864.3 308.1 L865.6 309.1 L867 312.1 L868.1 313.9 L869.1 314.2 L870.2 315.9 L871.3 315.7 L872.6 315.3 L874 313.7 L875.2 315.1 L876.3 314.8 L877.5 316 L878.6 316.6 L879.7 316.7 L880.8 316.3 L881.9 315.1 L883.2 316.9 L884.5 319 L885.7 319.5 L886.8 318.7 L888 318.6 L889.4 318.2 L890.7 319.9 L891.9 318 L893 317.4 L894.2 317.8 L895.5 320.1 L896.8 323.9 L898.6 321.6 L899.9 323.4 L901.2 326.9 L902.5 326.4 L903.9 326 L905.6 333.9 L906.8 335.6 L907.9 336.4 L909.1 337.5 L910.5 334.9 L911.8 332.7 L912.9 333.2 L914 332.4 L915.1 333 L916.2 333.2 L917.3 331.8 L918.4 328.9 L919.5 326.3 L920.6 325.1 L921.9 328.4 L923.2 329.7 L924.4 329.8 L925.5 328.4 L926.7 328.3 L927.9 328.6 L929 329.6 L930.2 330.1 L931.4 329.5 L932.5 327.6 L933.7 327.4 L935.2 323.9" stroke="#0d0d0d" stroke-width="1"/>
<path d="M89 399.3 L90.3 398.3 L91.6 397.5 L92.9 396.9 L94.2 396.2 L95.5 396.4 L96.9 396.8 L98.2 397.5 L99.5 398.3 L100.8 398.6 L102.2 399 L103.5 399.3 L104.8 398.9 L106.1 398.9 L107.5 398.5 L108.8 398.2 L110.1 397.9 L111.4 398 L112.7 395.4 L114 395.5 L115.3 396.3 L116.7 396.6 L118 396.7 L119.3 395.3 L120.6 393.5 L121.8 393.7 L123 393.3 L124.2 393.3 L125.5 393.5 L126.7 393.6 L127.9 393.7 L129.1 393.7 L130.3 393.1 L131.5 393.4 L132.8 393.5 L134 393.3 L135.2 393.1 L136.4 393.3 L137.7 392.8 L139.1 392.1 L140.4 392.2 L141.7 391.7 L143 391 L144.3 390.4 L145.7 390.3 L147 389.6 L148.2 389.8 L149.4 390.1 L150.6 390.2 L151.8 390 L153 390.1 L154.2 390.3 L155.5 390.3 L156.7 390.2 L157.9 390.4 L159.1 390.9 L160.3 390.5 L161.5 390.9 L162.8 390.1 L164.1 390.1 L165.4 389.4 L166.8 389.1 L168.1 388.6 L169.4 388.2 L170.6 387.7 L171.8 387.8 L173.1 386.9 L174.3 386.7 L175.5 386.2 L176.7 386.1 L178.1 386.7 L179.6 386.9 L181.1 387.4 L182.5 388 L183.8 388.3 L185.1 388.1 L186.5 388.4 L187.8 388.8 L189.1 388.4 L190.4 388.5 L191.7 388.7 L193.1 389.2 L194.4 389.3 L195.7 389.3 L197 387.6 L198.4 386.2 L199.7 384.8 L201.4 385.6 L203.1 386.9 L204.3 386.1 L205.6 385.1 L206.8 384.8 L208 384.2 L209.3 383.6 L210.5 382.7 L211.7 382.1 L213 380.7 L214.2 380.3 L215.5 381.1 L216.8 382.2 L218.9 379.5 L220.4 380.7 L221.9 381.5 L223.4 382.2 L224.7 381 L226.1 380.2 L227.4 378.8 L228.7 378.7 L230 378.6 L231.3 378.1 L232.6 377.8 L233.9 377.8 L235.3 377.4 L236.6 377.4 L237.9 377.6 L239.2 377 L240.5 376.9 L241.8 376.1 L243.1 375.7 L244.5 375.3 L245.8 375.3 L247.1 374.6 L248.4 374.1 L249.7 373.5 L251.1 373.6 L252.4 372.8 L253.7 372.4 L255 372.9 L256.3 373.6 L257.7 374.3 L259 375.1 L260.3 376.1 L261.6 375.6 L262.9 374.6 L264.2 373.8 L265.6 373.5 L266.9 372.7 L268.2 372.2 L269.5 372.3 L270.9 371.4 L272.2 371.4 L273.5 371.3 L274.8 370.8 L276.2 370.9 L277.5 370.3 L278.8 369.9 L280.1 369.3 L281.4 369 L282.8 368.3 L284.1 368.1 L285.4 367.6 L286.7 367.6 L288 366.9 L289.3 367.8 L290.6 368.3 L292 368.6 L293.3 369.4 L294.6 370.3 L295.9 369.5 L297.2 368.8 L298.5 368.1 L299.9 367.9 L301.2 366.7 L302.5 366 L303.8 366 L305.1 365 L306.4 364.8 L307.8 364.8 L309.1 364.2 L310.4 364.3 L311.7 363.8 L313.1 363.7 L314.4 363.2 L315.7 363.7 L317 363.8 L318.3 363.9 L319.6 364.5 L320.9 364.1 L322.2 364.4 L323.6 364.3 L324.9 364.2 L326.2 363.7 L327.5 364.2 L328.9 365.1 L330.2 365.6 L331.5 365.3 L332.8 364.7 L334.2 364.4 L335.5 363.7 L336.8 363.2 L338.1 363.7 L339.4 364.2 L340.7 364.5 L342 364 L343.4 364.1 L344.7 363.7 L346 362.8 L347.3 363 L348.6 362.6 L350 362.1 L351.3 361.6 L352.5 361.4 L353.8 362.1 L355 361.9 L356.3 361.8 L357.6 362.5 L359 362.4 L360.3 362.4 L361.6 362.6 L362.9 363.2 L364.2 364.1 L365.5 364.6 L366.9 365.2 L368.2 365.9 L369.5 365.9 L370.8 366.3 L372.1 367.2 L373.4 367.1 L374.7 366.1 L376.1 366.3 L377.4 365.4 L378.7 365.3 L380 365.7 L381.3 365.9 L382.7 366.2 L384 366.2 L385.3 366.4 L386.6 366.2 L387.9 365.3 L389.2 365.1 L390.6 364.5 L391.9 364.4 L393.2 363.8 L394.5 363.2 L395.8 363.2 L397.1 363.2 L398.5 362.9 L399.8 362.9 L401.1 363.3 L402.4 363.2 L403.8 363.5 L405.1 363.3 L406.4 363.2 L407.7 362.6 L409 362.3 L410.4 362.3 L411.7 361.7 L413 361 L414.3 361.2 L415.7 360.8 L417 359.9 L418.3 359.8 L419.6 360.4 L420.9 360.9 L422.2 361.6 L423.5 361.4 L424.9 360.6 L426.2 360.1 L427.5 359.8 L428.8 358.9 L430.1 358.4 L431.5 356.9 L432.8 356.3 L434.1 356.2 L435.4 356.7 L436.8 357 L438.1 356.9 L439.4 357.1 L440.7 356.2 L442 355.6 L443.4 354.7 L444.7 353.3 L446 352.7 L447.3 353.6 L448.6 354 L449.9 352.5 L451.2 351.2 L452.5 350 L453.8 350.1 L455.1 349.6 L456.5 349.7 L457.8 349.1 L459.1 349.2 L460.4 349 L461.7 348.1 L463.1 347.7 L464.4 347.5 L465.7 347.1 L467 347.5 L468.4 348.1 L469.7 348.8 L471 349.2 L472.3 349.2 L473.7 349.9 L475 350.5 L476.3 350.7 L477.6 350.8 L478.9 351.1 L480.2 351.1 L481.5 351.3 L482.8 351.9 L484.1 352.9 L485.5 354.2 L486.8 354.8 L488.1 355.8 L489.4 356.1 L490.7 356.3 L492.1 356.2 L493.4 356.3 L494.7 356.3 L496 356.9 L497.4 357.3 L498.7 358.2 L500 358.5 L501.3 358.2 L502.6 358.2 L503.9 357.4 L505.3 357.5 L506.6 357.1 L507.9 356.7 L509.2 356.3 L510.5 356.6 L511.8 356.7 L513.2 357.4 L514.5 357.5 L515.8 357.9 L517.1 358.8 L518.5 359.2 L519.8 360 L521.1 361.1 L522.4 361.2 L523.8 362 L525.1 361.8 L526.4 362.4 L527.7 362.6 L529 362.2 L530.3 362.2 L531.7 362 L533 362.1 L534.3 361.7 L535.6 361.9 L536.9 361.3 L538.3 361.1 L539.6 360.3 L540.9 360.2 L542.2 360.6 L543.5 360.5 L544.9 360.6 L546.2 360.5 L547.5 360.6 L548.8 361.3 L550.1 361.1 L551.4 361.7 L552.7 362 L554 362.4 L555.4 362.8 L556.7 362.6 L558 363.2 L559.2 363.3 L560.4 363.2 L561.6 363.3 L562.8 363.5 L564 363.4 L565.2 363.5 L566.4 362.9 L567.6 363.3 L568.8 363.3 L570 363.4 L571.2 363.2 L572.5 363 L573.8 362.8 L575.1 362.2 L576.5 362.3 L577.8 361.6 L579.1 361.5 L580.4 361.1 L581.7 361.4 L583 361.2 L584.4 361 L585.7 360.9 L587 361 L588.3 361.2 L589.7 361.4 L591 361.4 L592.3 361.1 L593.6 360.3 L594.9 359.6 L596.2 359 L597.5 359.2 L598.9 358.8 L600.2 358.9 L601.5 359 L602.8 358.1 L604.1 357.7 L605.5 357.4 L606.8 357 L608.1 356.3 L609.4 356.9 L610.7 357.3 L612.1 358.2 L613.4 358.5 L614.7 359 L616 358.8 L617.4 358.7 L618.7 359.3 L620 359 L621.2 359.7 L622.5 360 L623.8 360.2 L625 360.5 L626.3 360.5 L627.7 360.4 L629 360.7 L630.4 360.8 L631.7 361.4 L633.1 361.5 L634.4 361.3 L635.7 361.7 L637.1 361.5 L638.4 361.8 L639.8 362 L641.1 362.7 L642.5 362.4 L643.8 362.8 L645 362.9 L646.3 362.7 L647.5 362.6 L648.8 362.8 L650 362.2 L651.3 362.3 L652.5 361.9 L653.8 361.8 L655 361.7 L656.3 361.9 L657.6 361.4 L658.9 360.9 L660.2 360.5 L661.5 360.8 L662.8 359.9 L664.1 359.7 L665.4 360.3 L666.6 360.6 L667.9 361 L669.1 361.3 L670.4 361.9 L671.6 362.2 L672.9 362.4 L674.1 362.7 L675.4 363.2 L676.6 363.4 L677.9 363.8 L679.1 363.8 L680.4 364 L681.7 364 L683 364.6 L684.2 364.6 L685.5 364.5 L686.8 364.8 L688.1 365.5 L689.3 365.2 L690.6 365.6 L691.8 365.6 L693.1 366 L694.3 366.2 L695.5 365.9 L696.7 366.1 L698 366.2 L699.2 366.1 L700.4 366.8 L701.7 366.3 L702.9 367.1 L704.1 366.6 L705.3 366.7 L706.6 367.3 L707.8 367.2 L709.1 367.7 L710.5 367.6 L711.8 368.1 L713.2 368.3 L714.5 368.7 L715.9 368.6 L717.2 369.1 L718.5 369.4 L719.8 369.6 L721.1 369.5 L722.4 369.8 L723.7 369.9 L725 369.7 L726.3 370.1 L727.5 370.8 L728.8 371.3 L730 371.5 L731.3 371.9 L732.8 371.4 L734.4 371.6 L735.9 371.3 L737.2 372.2 L738.6 372.3 L739.9 373.1 L741.3 373.9 L742.6 374.2 L744 374.4 L745.3 375.3 L746.6 375.6 L747.9 375.6 L749.2 376.2 L750.5 376.3 L751.8 376.2 L753.1 376.6 L754.4 377.1 L755.8 377.2 L757.1 377.3 L758.5 377.9 L759.8 378.2 L761.2 378.4 L762.5 378.4 L763.8 378.6 L765.1 378.4 L766.4 378.4 L767.7 378.3 L769 378.2 L770.3 378.1 L771.8 377.7 L773.4 376.6 L774.7 376.8 L775.9 376.9 L777.2 377.6 L778.4 377.8 L779.7 378.1 L781.3 379.5 L782.8 380.9 L784.4 382.2 L785.6 381.2 L786.9 380.6 L788.1 382 L789.4 383.4 L790.6 385.3 L792.2 384.7 L793.8 383.8 L795 384.8 L796.3 385.4 L797.5 385.8 L798.8 387.1 L800 387.5 L801.2 387.8 L802.5 387.6 L803.8 387.2 L805 387.9 L806.2 387.7 L807.5 387.8 L808.8 387.4 L810 387.9 L811.2 387.4 L812.5 387.8 L814.1 388.7 L815.6 389.4 L817.2 390.6 L818.5 390.9 L819.8 391.7 L821.1 392 L822.4 392.5 L823.7 392.5 L825 393.1 L826.3 392.9 L827.7 392.9 L829 392.4 L830.4 392.5 L831.7 392.8 L833.1 392.5 L834.4 392.2 L836 393.8 L837.5 394.8 L839.1 396.3 L840.7 396.9 L842.2 397.5 L843.8 397.8 L845.1 398.6 L846.4 399.1 L847.7 399.6 L849 400.2 L850.3 401.5 L851.6 401.9 L852.8 402.5 L854 402.4 L855.2 403 L856.4 403.1 L857.7 403.5 L858.9 404 L860.1 404 L861.3 404.5 L862.5 404.7 L863.8 404.8 L865.1 405.3 L866.3 405.2 L867.6 405.7 L868.9 406 L870.2 406.7 L871.5 406.4 L872.8 407.1 L874 406.9 L875.3 407.9 L876.6 407.8 L878 408.4 L879.5 409.2 L880.9 410.1 L882.4 411.4 L883.8 411.9 L885 411.7 L886.3 411.5 L887.5 410.9 L888.8 411.1 L890 411 L891.3 411.4 L892.5 411.7 L893.8 411.9 L895.1 412.8 L896.4 412.7 L897.7 413.3 L899 414.2 L900.3 414.2 L901.6 415 L903.2 415 L904.7 414.3 L906.3 414.1 L907.6 414.4 L908.9 414.8 L910.2 415.3 L911.5 415 L912.8 415.8 L914.1 415.9 L915.3 416 L916.5 416.7 L917.7 416.5 L918.9 417.4 L920.2 417.3 L921.4 417.6 L922.6 417.8 L923.8 418.4 L925 418.8 L926.3 418.9 L927.7 419.7 L929 419.6 L930.4 419.7 L931.7 420.4 L933.1 420.1 L934.4 420.6" stroke="#0d0d0d" stroke-width="1"/>
<path d="M89.1 58.7 L89.7 48.2 L90.9 53.4 L91.7 50.1 L92.6 47 L93.4 48.3 L94.1 50.5 L95.3 58.7 L96.1 66.9 L96.7 71.6 L97.7 57.5 L98.5 65.7 L99.6 45.6 L100.8 65.7 L102 70.4 L102.6 78.6 L103.4 85.7 L104.3 69.3 L105.2 75.1 L105.9 67.7 L106.7 61.6 L107.9 82.1 L109 75.1 L110.2 66.9 L111 66.9 L111.7 64.6 L112.9 48.2 L113.7 44.6 L114.5 56.4 L115.2 41.1 L116.1 51.7 L117.2 63.4 L118.4 43.5 L119.6 54 L120.5 47 L121.6 39.4 L122.7 50.5 L123.7 44.6 L124.8 61 L125.5 54.9 L126.3 50.5 L127.4 59.9 L128.2 61.6 L128.9 63.4 L129.7 58.8 L130.5 52.8 L131.6 66.9 L132.5 71.4 L133.4 77.5 L134.1 65.2 L134.8 52.8 L136 69.3 L136.6 50.5 L137.7 69.3 L138.6 75.1 L139.3 76.1 L140.1 76.3 L141.3 56.4 L142.2 31.2 L143 51.7 L143.9 35.3 L145.1 47 L145.9 57.5 L147.1 44.6 L148.3 51.7 L149.5 69.3 L150.4 59.9 L151.6 50.5 L152.3 46.7 L153 45.8 L154.1 64.6 L154.8 52 L155.5 40 L156.5 56.4 L157.7 42.3 L158.8 52.8 L159.7 40 L160.6 51.7 L161.8 49.3 L162.6 59.9 L163.5 47 L164.7 42.9 L165.9 56.4 L166.7 62.2 L167.6 48.2 L168.8 64.6 L169.6 66.9 L170.6 57.5 L171.5 66.9 L172.3 57.5 L173.5 70.4 L174.7 73.9 L175.8 72.8 L177 81 L178.2 76.3 L179.1 83.3 L180.3 74.5 L181.3 84.5 L182.3 88 L183.1 83.7 L184 78.6 L185.2 66.9 L186.4 82.1 L187.5 65.2 L188.7 78.6 L189.5 85.7 L190.3 80.9 L191.1 76.3 L192.2 82.1 L193.4 72.8 L194.2 79 L194.9 84.5 L196.1 73.9 L197.3 83.3 L198.4 88 L199.4 83.3 L200.4 79.8 L201.6 84.5 L202.8 76.3 L203.7 74.3 L204.5 73.9 L205 73.9 L206.2 66.9 L207.1 78.6 L207.8 79.7 L208.5 83.3 L209.5 66.9 L210.5 59.9 L211.4 68.1 L212.4 66.9 L213.4 71.6 L214.4 70.4 L215.5 73.9 L216.7 72.8 L217.9 81 L219.1 73.9 L220 76.3 L220.8 71 L222 82.1 L222.8 88 L225.2 88 L226.1 76.3 L227 69.3 L227.9 76.3 L228.8 70.4 L229.8 73.9 L231 71.6 L232 65.2 L233.1 75.1 L234.3 73.9 L235 70.4 L235.7 66.9 L236.9 79.8 L237.6 72.9 L238.4 64.6 L239.6 73.9 L240.7 68.1 L241.6 71.6 L242.7 67.5 L243.9 77.5 L244.8 68.1 L245.7 76.3 L246.6 69.3 L247.4 78.6 L248.2 80.1 L248.9 81 L250.1 82.1 L250.9 85.1 L251.9 81 L253 79.8 L254.2 76.3 L255.4 70.4 L256.6 88 L257.7 78.6 L258.4 76.6 L259.1 72.8 L260.1 82.1 L261.3 73.9 L262.4 65.7 L263.6 76.3 L264.8 83.3 L265.7 72.8 L266.5 81 L267.7 71.6 L268.9 86.8 L269.7 84.7 L270.6 83.3 L271.3 81.5 L272 78 L272.8 78.2 L273.6 81 L274.7 83.3 L275.9 78.6 L276.8 81.5 L277.7 85.7 L278.4 82.7 L279.1 78.6 L279.8 83.2 L280.6 86.2 L281.4 78.2 L282.1 70.4 L283.3 86.8 L284 80.8 L284.7 76.3 L285.9 81 L287 75.1 L288.2 72.8 L289.4 82.1 L290.1 73.5 L290.8 65.7 L291.7 79.8 L292.5 51.7 L293.7 70.4 L294.7 68.1 L295.8 76.3 L297 77.5 L298.2 76.9 L299.3 81 L300.5 82.1 L301.7 88 L304.4 88 L305.6 75.7 L306.3 78.6 L307 83.3 L308.1 88 L310.5 88 L311.2 86.4 L311.9 86.2 L313.1 79.8 L314 86.2 L315.2 85.1 L316 88 L316.9 79.8 L317.8 78.4 L318.7 75.1 L319.6 74.7 L320.4 76.3 L321.3 76.3 L322.2 73.9 L322.9 74.6 L323.6 72.8 L324.3 70.2 L325 70.4 L325.8 70.6 L326.6 71.6 L327.3 72.2 L328.2 71.2 L329.1 73.4 L330 72.5 L330.9 72.2 L331.7 73.8 L332.6 72.8 L333.5 71.8 L334.4 73.4 L335.5 72.8 L336.4 79.2 L337.3 76.3 L338.2 76.6 L339.1 76.3 L340.2 76.9 L341.4 72.8 L342.6 68.1 L343.8 66.3 L344.9 70.4 L345.9 68.7 L346.7 74.5 L347.9 69.3 L349 70.4 L349.9 68.3 L350.8 68.7 L351.6 68.3 L352.3 68.8 L353.1 66.9 L353.9 65.5 L354.6 64.5 L355.3 64.3 L356.1 65.2 L356.9 64.1 L357.8 62.8 L358.7 62.1 L359.6 64.6 L360.7 61.6 L361.6 57.7 L362.5 56.4 L363.7 58.7 L364.6 57.2 L365.4 55.8 L366.3 58.3 L367.2 58.1 L368.1 57.3 L368.9 56.9 L369.8 57.8 L370.7 59.3 L371.9 57.5 L372.8 59.7 L373.6 61 L374.5 58.3 L375.4 58.1 L376.6 69.3 L377.4 75.8 L378.3 82.1 L379.5 70.4 L380.7 69.8 L381.8 75.1 L383 70.4 L384.2 72.8 L385.4 79.8 L386.5 71.6 L387.2 70.3 L387.9 71 L388.9 84.5 L389.6 85.7 L390.3 86.2 L391.4 76.3 L392.4 76.3 L393.6 88 L401.2 88 L402.3 80.4 L403 83.3 L403.8 83.3 L404.5 84.2 L405.3 88 L408.8 88 L409.6 87.6 L410.4 87.2 L411.1 86.2 L411.9 79.5 L412.7 73.9 L413.7 71.6 L414.7 76.3 L415.8 69.3 L416.6 77.5 L417.6 69.3 L418.8 76.9 L419.5 74.7 L420.2 73.9 L421.1 74.5 L421.8 70.4 L422.5 64.6 L423.3 66.2 L424 64.6 L424.8 69.3 L426 68.1 L426.7 70.3 L427.4 74.3 L428.1 76.9 L429 77.1 L429.9 74.5 L430.8 72.5 L431.6 72.2 L432.5 70.2 L433.4 67.5 L434.6 68.1 L435.5 64 L436.3 62.8 L437 66.2 L437.7 70.4 L438.5 72.2 L439.3 72.8 L440.4 73.4 L441.2 72.8 L442 71.6 L442.7 75.4 L443.4 77.5 L444.2 77 L445 79.2 L446.2 88 L446.9 83 L447.6 78.6 L448.8 81 L449.9 80.4 L451.1 87.4 L452.3 78.6 L453 80.4 L453.8 79.8 L454.6 87.4 L455.4 87.4 L456.1 86.8 L457.3 73.9 L458.2 72 L459.1 70.4 L460.2 85.7 L461.4 83.9 L462.6 88 L465.2 88 L466.3 80.4 L467.5 88 L469 88 L470.2 72.8 L471.1 70.7 L472 69.3 L472.8 72 L473.7 71.6 L474.9 70.4 L476.1 81 L477.2 76.9 L478.4 80.4 L479.6 75.1 L480.7 69.8 L481.9 79.8 L482.7 88 L485.4 88 L486.3 85 L487.2 81.6 L488.1 76.6 L488.9 73.4 L490.1 78.6 L491.3 83.3 L492.2 78 L493 71.6 L494.2 82.1 L495.4 86.2 L496.6 88 L497.4 86.9 L498.3 86.8 L499.1 86.3 L499.8 86.2 L500.7 88 L507.1 88 L508.3 78.6 L509.5 84.5 L510.6 86.2 L511.8 88 L512.5 84.7 L513.2 83.3 L514 82.6 L514.7 82.1 L515.9 83.3 L517.1 80.4 L518.2 86.8 L519.4 80.4 L520.6 68.1 L521.5 67.2 L522.3 67.5 L523.3 81 L524.1 84.5 L525.3 61 L526 58.9 L526.8 59.3 L528 66.9 L528.8 59.9 L529.6 76.3 L530.4 68 L531.1 59.3 L532.3 70.4 L533.5 76.3 L534.7 83.9 L535.4 75.9 L536.2 69.3 L537.3 71.6 L538.5 79.8 L539.7 70.4 L540.5 76.9 L541.7 72.8 L542.5 73.9 L543.7 65.2 L544.6 77.5 L545.8 72.8 L546.7 78.6 L547.9 69.3 L549.1 84.5 L549.8 86.3 L550.5 86.2 L551.6 71 L552.8 81 L554 70.4 L555.2 85.1 L556.3 76.3 L557 71 L557.7 67.5 L558.5 71 L559.3 72.8 L560.4 75.1 L561.6 78.6 L562.5 78.1 L563.4 75.7 L564.2 77.2 L565 78.6 L566.2 78.6 L566.9 74.9 L567.6 70.4 L568.8 67.5 L569.5 67 L570.3 68.1 L571.4 66.9 L572.6 65.2 L573.8 73.9 L574.6 74.7 L575.3 73.9 L576.1 76.9 L577.3 70.4 L578.5 76.9 L579.6 77.5 L580.8 78.6 L582 83.3 L582.8 85.1 L583.5 87.4 L584.2 86.8 L584.9 88 L586.3 88 L587.3 71.6 L588.4 68.7 L589.6 69.3 L590.8 76.3 L592 67.5 L592.8 68.4 L593.7 66.3 L594.9 76.3 L595.6 78 L596.4 80.4 L597.6 72.8 L598.3 71.8 L599 71.6 L600.2 64.6 L601.3 59.9 L602.5 73.9 L603.4 70.4 L604.6 79.8 L605.4 63.4 L606.6 71.6 L607.8 69.3 L608.9 75.1 L610.1 78 L611 72.8 L611.9 66.3 L613 75.7 L614.2 68.1 L614.9 65 L615.6 62.8 L616.6 73.9 L617.7 68.1 L618.9 70.4 L620.1 67.5 L621.3 75.1 L622.2 81 L622.9 80.3 L623.6 78.6 L624.3 74.1 L625 71.6 L625.9 70.4 L626.6 66.1 L627.3 60.5 L628.5 75.1 L629.5 63.4 L630.6 72.8 L631.8 81 L633 82.1 L633.9 72.8 L635.1 81 L635.9 86.2 L637.1 79.8 L638 73.5 L638.8 68.1 L640 79.2 L641.2 76.9 L642.3 70.4 L643 74.3 L643.8 79.8 L644.5 77.8 L645.3 72.8 L646.4 69.3 L647.2 66.4 L648 65.7 L649.1 71.6 L649.8 73.3 L650.6 72.2 L651.4 72.9 L652.3 70.4 L653.5 82.1 L654.7 83.9 L655.5 66.3 L656.6 88 L657.4 83.5 L658.2 78.6 L659.3 72.8 L660.5 78.6 L661.7 76.9 L662.9 88 L663.6 82.1 L664.4 78 L665.6 76.3 L666.7 81 L667.4 83.1 L668.1 88 L669.5 88 L670.5 70.4 L671.4 88 L672.1 78.7 L672.8 70.4 L673.5 78.1 L674.2 86.2 L675 84 L675.7 81 L676.9 78.6 L677.7 65.2 L678.9 73.9 L679.8 86.2 L680.8 72.8 L682 86.2 L683.1 69.3 L684.3 83.3 L685 75.1 L685.7 77.5 L686.4 76.9 L687.3 69.3 L688.5 72.8 L689.2 69.7 L689.9 67.5 L691.1 69.3 L692.3 71.6 L693.2 65.2 L694.4 68.1 L695.5 64.6 L696.5 62.2 L697.7 76.9 L698.5 81 L699.6 68.1 L700.8 68.1 L701.6 68.7 L702.3 71.6 L703 68.3 L703.8 64.6 L704.5 63.1 L705.2 64 L705.9 64.7 L706.7 68.1 L707.9 71.6 L709 68.1 L709.8 67.7 L710.5 66.9 L711.4 57.5 L712.2 69.3 L713.4 78.6 L714.1 79.3 L714.9 78.6 L715.8 86.2 L716.5 79.3 L717.2 73.9 L718.4 78.6 L719.2 68.1 L720.2 82.1 L720.9 79.1 L721.6 76.3 L722.7 45.8 L723.9 44.6 L725.1 64.6 L726 40 L727.2 70.4 L728.4 56.4 L729.3 72.8 L730.1 52.8 L731.3 43.5 L732.5 68.1 L733.6 78.6 L734.8 75.1 L736 82.1 L737.2 77.5 L737.7 85.7 L738.4 81.3 L739.1 76.3 L739.9 68.8 L740.7 60.5 L741.8 79.8 L743 64.6 L744.2 75.1 L744.9 69.6 L745.7 64.6 L746.9 69.3 L748 64.6 L748.8 67 L749.5 66.9 L750.6 64.6 L751.5 62.3 L752.4 62.2 L753.1 65.8 L753.9 68.1 L755.1 63.4 L755.8 62.5 L756.5 59.9 L757.7 66.3 L758.4 64.3 L759.1 59.9 L760.2 62.2 L761.4 56.9 L762.6 61 L763.8 74.5 L764.7 85.7 L765.9 66.9 L767 62.2 L767.7 57.5 L768.4 52.8 L769.6 62.2 L770.8 75.1 L771.5 72.7 L772.3 72.8 L773.5 66.3 L774.7 80.4 L775.4 74.6 L776.2 70.4 L777 53.4 L778.2 68.1 L779.3 59.9 L780.5 69.3 L781.7 56.4 L782.5 76.9 L783.3 68.4 L784 59.9 L784.8 54.6 L785.6 50.5 L786.4 62.2 L787.5 77.5 L788.7 73.9 L789.9 82.1 L791.1 83.3 L791.9 75.1 L792.6 77.9 L793.4 79.8 L794.2 69.1 L794.9 59.9 L796.1 69.3 L796.8 73.9 L797.5 77.5 L798.7 48.2 L799.8 42.9 L801 50.5 L801.6 67.5 L802.8 56.4 L803.9 43.5 L805 42.3 L806.4 54 L807.7 47.2 L809.1 60.9 L810.1 49.8 L811.2 39.7 L812.5 69.1 L813.5 71.1 L814.8 30.1 L816.2 47.2 L817.3 56.8 L818.7 54 L820 42.4 L821.4 60.2 L822.8 45.8 L824.1 69.1 L825.2 68.4 L826.2 49.9 L827.6 29.4 L828.9 52.6 L830.3 68.4 L831.7 55.4 L833 40.3 L834.4 38.3 L835.8 44.4 L837.1 49.9 L838.2 34.9 L839.2 56.8 L840.3 43.8 L841.2 58.1 L842.6 47.2 L844 56.8 L845.3 77.3 L846.3 62.2 L847.4 79.3 L848.5 37.6 L849.3 30.9 L850.1 26 L851.5 69.1 L852.9 48.5 L854.2 32.1 L855.6 55.4 L857 73.8 L858 58.1 L859.4 51.3 L860.4 48.5 L861.7 52.6 L863.1 65 L864.5 66.3 L865.8 47.9 L867.2 59.5 L868.6 60.9 L869.9 62.9 L871.3 54 L872.7 49.9 L874 60.2 L875 40.3 L876.1 60.9 L877.5 48.5 L878.8 49.9 L880.2 60.2 L881.3 47.9 L882.7 72.5 L884 49.2 L884.8 53.1 L885.7 58.1 L887 66.3 L888.4 49.9 L889.2 58.7 L890 67.7 L891.4 47.2 L892.5 55.4 L893.5 68.1 L894.6 80.7 L895.9 66.3 L897.3 45.8 L898.2 67 L899.3 43.8 L900.7 33.5 L902.1 63.6 L903.4 75.9 L904.8 54 L905.9 71.8 L907.3 56.8 L908.6 70.4 L909.5 71.4 L910.3 73.2 L911.6 86.1 L913 70.4 L914.4 78.6 L915.5 81.4 L916.4 65.6 L917.4 77.9 L918.5 55.4 L919.6 74.5 L920.9 66.3 L921.8 57.5 L922.6 49.9 L923.9 56.8 L925 65.6 L926 49.9 L927.4 62.2 L928.7 60.9 L930.1 66.3 L931.1 62.2 L932.2 70.4 L933.2 52.6 L934.2 41.7 L934.9 54" stroke="#0a0a0a" stroke-width="1.1"/>
</g>
<text x="106.3" y="23.1" font-size="9.45" fill="#ff0000">10 min. peak winds in red</text>
<path d="M90.9 35.3h2.2 M98 39.4h2.2 M101.7 52.5h2.2 M111.8 32.3h2.2 M110.9 41.4h2.2 M119.9 29.4h2.2 M124 40.5h2.2 M132.9 43.5h2.2 M141 27.4h2.2 M151.9 33.5h2.2 M153.9 29.4h2.2 M163 34.3h2.2 M165.9 32.3h2.2 M170.9 38.2h2.2 M178.8 59.5h2.2 M183.9 55.4h2.2 M189.7 65.5h2.2 M194.9 64.2h2.2 M204.8 62.5h2.2 M208.8 50.5h2.2 M211.9 63.4h2.2 M218.9 64.3h2.2 M225 62.5h2.2 M229.9 52.5h2.2 M236.9 59.5h2.2 M241 58.4h2.2 M247.8 73.6h2.2 M253.9 65.4h2.2 M261 63.5h2.2 M266.9 65.5h2.2 M273.9 70.4h2.2 M280.9 64.3h2.2 M285.9 66.6h2.2 M290.9 43.5h2.2 M296.8 66.6h2.2 M303.9 64.3h2.2 M311.4 71.4h2.2 M323.4 66.6h2.2 M322.8 69.5h2.2 M324.3 66.6h2.2 M330 69.5h2.2 M340 67.5h2.2 M341.8 64.3h2.2 M350.9 64.3h2.2 M357.9 57.5h2.2 M361 52.5h2.2 M364.9 52.5h2.2 M373.9 53.4h2.2 M379 66.6h2.2 M382.8 69.5h2.2 M390.9 71.4h2.2 M393.9 88.6h2.2 M400.9 74.4h2.2 M410.9 70.4h2.2 M413.9 64.3h2.2 M420.9 57.4h2.2 M424.9 66.6h2.2 M434.6 61.6h2.2 M433.7 62.5h2.2 M440.9 70.4h2.2 M450.9 69.5h2.2 M456 63.4h2.2 M460 78.4h2.2 M468.9 64.3h2.2 M470.9 66.6h2.2 M478.8 64.3h2.2 M487.8 71.4h2.2 M491.9 67.5h2.2 M493.9 78.4h2.2 M499.9 88.6h2.2 M506 72.5h2.2 M516 70.4h2.2 M519.8 61.4h2.2 M525 51.4h2.2 M530 56.5h2.2 M535 64.3h2.2 M542 60.5h2.2 M550.9 64.3h2.2 M556.1 58.5h2.2 M559 69.5h2.2 M565.9 59.5h2.2 M570 59.5h2.2 M576 63.4h2.2 M585.9 63.4h2.2 M587.9 57.4h2.2 M596.9 55.4h2.2 M604 56.5h2.2 M610 59.5h2.2 M615.9 51.4h2.2 M617.9 55.4h2.2 M626 50.5h2.2 M628.9 58.5h2.2 M636.9 58.5h2.2 M645.9 61.3h2.2 M647.1 60.5h2.2 M653.9 61.4h2.2 M660 69.5h2.2 M669 60.5h2.2 M676.1 61.4h2.2 M676.1 63.4h2.2 M685.9 63.4h2.2 M691.9 59.5h2.2 M694.8 56.5h2.2 M702.9 58.5h2.2 M709.9 54.5h2.2 M716.9 67.5h2.2 M721.9 30.6h2.2 M724.9 32.5h2.2 M730 37.4h2.2 M739 52.5h2.2 M746 51.4h2.2 M752 54.5h2.2 M758 52.5h2.2 M760.1 51.4h2.2 M767.1 47.5h2.2 M775.9 36.4h2.2 M777 48.4h2.2 M783.9 45.5h2.2 M792.9 46.4h2.2 M797.8 36.4h2.2 M803.4 23.5h2.2 M804.3 23.4h2.2 M809.9 31.3h2.2 M812.9 20.4h2.2 M816.9 29.4h2.2 M825.9 16.4h2.2 M831.9 24.5h2.2 M836.9 18.5h2.2 M841 35.3h2.2 M847.8 16.4h2.2 M852.8 19.4h2.2 M858.9 34.3h2.2 M864.9 31.3h2.2 M872.8 24.5h2.2 M876.9 33.4h2.2 M886.9 36.4h2.2 M890.9 30.4h2.2 M898.9 19.4h2.2 M900 35.3h2.2 M906.9 43.4h2.2 M916.8 42.4h2.2 M920.9 39.4h2.2 M923.9 35.3h2.2" stroke="#ff0000" stroke-width="1" fill="none"/>
<path d="M189 107.5h2 M132 171.5h2 M182 155.5h2 M181 159.5h2 M188 158.5h2 M193 161.5h2 M202 161.5h2 M195 164.5h2 M201 165.5h2 M152 110.5h2 M124 108.5h2 M114 107.5h2 M106 107.5h2 M101 107.5h2 M99 101.5h2 M102 101.5h2 M101 101.5h2 M96 102.5h2 M96 102.5h2 M97 101.5h2 M100 103.5h2 M97 101.5h2 M145 107.5h2 M142 103.5h2 M166 100.5h2 M159 102.5h2 M117 101.5h2 M127 106.5h2 M119 104.5h2 M146 103.5h2 M141 100.5h2 M112 101.5h2 M148 103.5h2 M127 104.5h2 M135 102.5h2 M155 105.5h2 M123 104.5h2 M139 106.5h2 M151 102.5h2 M166 101.5h2 M133 106.5h2 M118 104.5h2 M111 105.5h2 M153 104.5h2 M160 102.5h2 M149 104.5h2 M143 103.5h2 M158 107.5h2 M136 105.5h2 M112 105.5h2 M147 107.5h2 M157 102.5h2 M131 105.5h2 M110 103.5h2 M119 101.5h2 M112 106.5h2 M116 102.5h2 M132 106.5h2 M114 103.5h2 M141 107.5h2 M157 106.5h2 M125 103.5h2 M130 107.5h2 M165 101.5h2 M119 102.5h2 M122 103.5h2 M143 102.5h2 M109 103.5h2 M130 104.5h2 M164 105.5h2 M139 105.5h2 M148 100.5h2 M161 106.5h2 M160 106.5h2 M132 103.5h2 M115 105.5h2 M113 100.5h2 M121 101.5h2 M129 100.5h2 M109 101.5h2 M115 103.5h2 M110 106.5h2 M145 101.5h2 M124 102.5h2 M130 101.5h2 M158 107.5h2 M136 103.5h2 M114 101.5h2 M129 102.5h2 M157 101.5h2 M110 107.5h2 M140 101.5h2 M140 100.5h2 M140 107.5h2 M159 105.5h2 M124 103.5h2 M119 106.5h2 M140 106.5h2 M128 101.5h2 M156 107.5h2 M158 106.5h2 M156 105.5h2 M122 104.5h2 M130 100.5h2 M111 102.5h2 M124 105.5h2 M164 103.5h2 M163 107.5h2 M164 103.5h2 M122 101.5h2 M120 101.5h2 M145 107.5h2 M158 103.5h2 M147 106.5h2 M114 105.5h2 M162 106.5h2 M152 103.5h2 M119 106.5h2 M128 106.5h2 M165 103.5h2 M132 107.5h2 M151 101.5h2 M116 101.5h2 M161 106.5h2 M117 106.5h2 M166 105.5h2 M129 104.5h2 M117 100.5h2 M165 105.5h2 M139 107.5h2 M134 106.5h2 M157 101.5h2 M160 100.5h2 M160 101.5h2 M160 101.5h2 M159 101.5h2 M161 101.5h2 M163 101.5h2 M162 101.5h2 M162 101.5h2 M162 100.5h2 M162 100.5h2 M158 101.5h2 M159 101.5h2 M164 101.5h2 M177 102.5h2 M185 103.5h2 M170 102.5h2 M175 101.5h2 M192 102.5h2 M185 103.5h2 M196 102.5h2 M187 102.5h2 M183 103.5h2 M181 102.5h2 M182 104.5h2 M189 104.5h2 M197 101.5h2 M185 104.5h2 M194 100.5h2 M171 102.5h2 M169 100.5h2 M169 103.5h2 M192 104.5h2 M172 103.5h2 M188 100.5h2 M195 104.5h2 M174 104.5h2 M180 102.5h2 M199 104.5h2 M172 101.5h2 M184 101.5h2 M173 101.5h2 M190 99.5h2 M185 102.5h2 M168 101.5h2 M187 102.5h2 M169 104.5h2 M192 104.5h2 M102 172.5h2 M102 173.5h2 M104 171.5h2 M106 173.5h2 M111 172.5h2 M103 173.5h2 M108 173.5h2 M102 171.5h2 M109 172.5h2 M170 173.5h2 M190 172.5h2 M170 172.5h2 M169 172.5h2 M184 169.5h2 M187 173.5h2 M177 167.5h2 M187 168.5h2 M171 167.5h2 M169 168.5h2 M179 168.5h2 M195 168.5h2 M186 167.5h2 M180 166.5h2 M176 166.5h2 M194 170.5h2 M174 170.5h2 M202 167.5h2 M197 169.5h2 M185 172.5h2 M182 170.5h2 M192 173.5h2 M180 172.5h2 M193 171.5h2 M182 169.5h2 M169 167.5h2 M170 171.5h2 M176 167.5h2 M170 172.5h2 M201 167.5h2 M188 165.5h2 M188 166.5h2 M185 166.5h2 M187 168.5h2 M203 166.5h2 M187 168.5h2 M188 166.5h2 M89 112.5h2 M90 112.5h2 M90 112.5h2 M91 110.5h2 M91 111.5h2 M92 108.5h2 M92 109.5h2 M93 110.5h2 M94 111.5h2 M95 112.5h2 M95 108.5h2 M96 107.5h2 M96 109.5h2 M96 110.5h2 M98 109.5h2 M98 109.5h2 M98 108.5h2 M99 109.5h2 M223 107.5h2 M250 109.5h2 M255 115.5h2 M309 100.5h2 M312 100.5h2 M315 100.5h2 M299 173.5h2 M299 173.5h2 M307 113.5h2 M307 116.5h2 M256 105.5h2 M242 105.5h2 M248 104.5h2 M221 100.5h2 M215 102.5h2 M213 105.5h2 M241 103.5h2 M245 104.5h2 M237 100.5h2 M256 104.5h2 M237 103.5h2 M247 100.5h2 M252 101.5h2 M211 101.5h2 M251 101.5h2 M252 106.5h2 M237 102.5h2 M236 104.5h2 M254 103.5h2 M246 100.5h2 M215 101.5h2 M252 101.5h2 M241 100.5h2 M210 101.5h2 M248 104.5h2 M248 101.5h2 M238 102.5h2 M235 100.5h2 M261 101.5h2 M267 105.5h2 M207 102.5h2 M257 105.5h2 M234 101.5h2 M219 105.5h2 M219 103.5h2 M215 103.5h2 M265 100.5h2 M257 103.5h2 M261 104.5h2 M221 105.5h2 M236 100.5h2 M207 103.5h2 M234 101.5h2 M215 102.5h2 M226 105.5h2 M206 104.5h2 M258 100.5h2 M263 104.5h2 M262 101.5h2 M229 102.5h2 M268 103.5h2 M229 102.5h2 M223 100.5h2 M213 105.5h2 M224 105.5h2 M222 101.5h2 M238 101.5h2 M229 105.5h2 M300 104.5h2 M297 104.5h2 M301 102.5h2 M298 100.5h2 M298 102.5h2 M299 103.5h2 M294 100.5h2 M300 100.5h2 M296 101.5h2 M294 103.5h2 M301 101.5h2 M298 101.5h2 M297 102.5h2 M292 101.5h2 M293 104.5h2 M296 101.5h2 M232 173.5h2 M218 167.5h2 M210 167.5h2 M215 167.5h2 M211 168.5h2 M222 172.5h2 M227 169.5h2 M217 170.5h2 M216 169.5h2 M206 168.5h2 M234 167.5h2 M220 171.5h2 M231 168.5h2 M212 168.5h2 M216 169.5h2 M233 172.5h2 M231 166.5h2 M205 171.5h2 M232 170.5h2 M222 166.5h2 M216 173.5h2 M229 172.5h2 M234 168.5h2 M207 167.5h2 M220 171.5h2 M233 171.5h2 M224 172.5h2 M218 170.5h2 M205 172.5h2 M211 173.5h2 M224 168.5h2 M208 168.5h2 M224 171.5h2 M207 167.5h2 M245 172.5h2 M244 171.5h2 M246 171.5h2 M243 172.5h2 M250 172.5h2 M249 172.5h2 M242 171.5h2 M250 173.5h2 M258 170.5h2 M259 172.5h2 M259 171.5h2 M261 172.5h2 M258 170.5h2 M280 169.5h2 M281 168.5h2 M282 171.5h2 M281 168.5h2 M282 168.5h2 M313 168.5h2 M309 172.5h2 M309 173.5h2 M311 167.5h2 M309 169.5h2 M312 173.5h2 M316 158.5h2 M316 162.5h2 M316 156.5h2 M315 158.5h2 M323 162.5h2 M321 163.5h2 M323 158.5h2 M316 162.5h2 M322 156.5h2 M321 158.5h2 M268 113.5h2 M268 113.5h2 M268 115.5h2 M269 117.5h2 M269 118.5h2 M269 120.5h2 M270 121.5h2 M270 121.5h2 M271 124.5h2 M271 124.5h2 M271 125.5h2 M272 127.5h2 M272 124.5h2 M272 124.5h2 M274 122.5h2 M274 123.5h2 M274 121.5h2 M275 120.5h2 M275 120.5h2 M276 118.5h2 M276 118.5h2 M278 116.5h2 M278 113.5h2 M278 114.5h2 M282 102.5h2 M282 100.5h2 M282 101.5h2 M283 102.5h2 M284 104.5h2 M284 105.5h2 M285 104.5h2 M285 105.5h2 M286 105.5h2 M286 107.5h2 M287 106.5h2 M287 108.5h2 M288 110.5h2 M289 111.5h2 M289 109.5h2 M305 105.5h2 M304 106.5h2 M304 107.5h2 M303 109.5h2 M303 111.5h2 M303 110.5h2 M302 112.5h2 M302 113.5h2 M301 114.5h2 M376 166.5h2 M381 164.5h2 M389 169.5h2 M408 160.5h2 M413 163.5h2 M401 100.5h2 M399 102.5h2 M405 102.5h2 M408 102.5h2 M406 105.5h2 M406 113.5h2 M405 116.5h2 M324 159.5h2 M325 160.5h2 M326 158.5h2 M326 160.5h2 M327 157.5h2 M328 158.5h2 M328 156.5h2 M329 158.5h2 M330 158.5h2 M330 156.5h2 M330 156.5h2 M332 156.5h2 M332 155.5h2 M333 155.5h2 M333 156.5h2 M334 155.5h2 M334 157.5h2 M335 156.5h2 M335 156.5h2 M336 158.5h2 M336 157.5h2 M337 157.5h2 M338 158.5h2 M338 158.5h2 M339 159.5h2 M339 158.5h2 M340 159.5h2 M340 158.5h2 M341 160.5h2 M341 159.5h2 M342 161.5h2 M343 160.5h2 M343 159.5h2 M344 161.5h2 M344 158.5h2 M345 159.5h2 M345 161.5h2 M346 161.5h2 M347 161.5h2 M347 159.5h2 M348 160.5h2 M349 161.5h2 M349 160.5h2 M350 160.5h2 M350 159.5h2 M351 161.5h2 M351 160.5h2 M352 161.5h2 M352 159.5h2 M353 161.5h2 M354 159.5h2 M354 160.5h2 M355 161.5h2 M356 160.5h2 M356 160.5h2 M356 161.5h2 M357 160.5h2 M357 160.5h2 M358 160.5h2 M359 160.5h2 M359 162.5h2 M355 161.5h2 M356 160.5h2 M357 160.5h2 M358 161.5h2 M358 161.5h2 M359 161.5h2 M360 161.5h2 M360 161.5h2 M361 161.5h2 M362 161.5h2 M363 162.5h2 M360 160.5h2 M360 160.5h2 M361 161.5h2 M362 160.5h2 M362 159.5h2 M363 159.5h2 M364 161.5h2 M364 159.5h2 M365 160.5h2 M366 159.5h2 M366 161.5h2 M367 161.5h2 M367 161.5h2 M368 161.5h2 M369 159.5h2 M369 161.5h2 M370 159.5h2 M371 159.5h2 M371 159.5h2 M372 159.5h2 M372 161.5h2 M373 159.5h2 M373 160.5h2 M374 159.5h2 M374 162.5h2 M375 162.5h2 M375 162.5h2 M376 161.5h2 M377 160.5h2 M377 161.5h2 M378 162.5h2 M378 162.5h2 M379 160.5h2 M380 159.5h2 M381 160.5h2 M381 160.5h2 M382 158.5h2 M382 157.5h2 M383 158.5h2 M384 160.5h2 M384 159.5h2 M385 157.5h2 M385 157.5h2 M386 158.5h2 M387 159.5h2 M387 157.5h2 M388 156.5h2 M389 157.5h2 M389 157.5h2 M390 158.5h2 M391 156.5h2 M392 157.5h2 M392 159.5h2 M393 156.5h2 M394 157.5h2 M395 158.5h2 M396 156.5h2 M396 157.5h2 M397 156.5h2 M398 166.5h2 M399 168.5h2 M399 168.5h2 M400 169.5h2 M401 169.5h2 M402 171.5h2 M403 171.5h2 M405 173.5h2 M409 170.5h2 M410 170.5h2 M411 167.5h2 M411 168.5h2 M412 169.5h2 M412 168.5h2 M413 168.5h2 M414 166.5h2 M414 166.5h2 M414 165.5h2 M415 164.5h2 M415 166.5h2 M416 166.5h2 M417 163.5h2 M417 164.5h2 M418 163.5h2 M418 164.5h2 M419 161.5h2 M420 160.5h2 M420 161.5h2 M421 163.5h2 M421 160.5h2 M422 160.5h2 M422 162.5h2 M423 160.5h2 M423 161.5h2 M424 160.5h2 M424 160.5h2 M425 159.5h2 M425 157.5h2 M426 158.5h2 M426 158.5h2 M428 158.5h2 M429 160.5h2 M430 159.5h2 M430 159.5h2 M431 161.5h2 M432 162.5h2 M432 162.5h2 M433 163.5h2 M434 163.5h2 M434 163.5h2 M435 163.5h2 M435 162.5h2 M436 161.5h2 M437 162.5h2 M437 162.5h2 M438 161.5h2 M438 161.5h2 M439 161.5h2 M439 161.5h2 M440 160.5h2 M441 161.5h2 M441 160.5h2 M442 160.5h2 M443 160.5h2 M443 160.5h2 M444 160.5h2 M462 110.5h2 M462 113.5h2 M463 117.5h2 M481 101.5h2 M484 109.5h2 M515 100.5h2 M522 102.5h2 M522 105.5h2 M498 113.5h2 M501 113.5h2 M496 117.5h2 M499 116.5h2 M496 125.5h2 M500 130.5h2 M499 135.5h2 M450 164.5h2 M451 168.5h2 M452 171.5h2 M468 164.5h2 M479 166.5h2 M478 169.5h2 M481 170.5h2 M482 172.5h2 M493 170.5h2 M503 167.5h2 M502 169.5h2 M509 173.5h2 M457 105.5h2 M460 101.5h2 M465 100.5h2 M464 101.5h2 M452 101.5h2 M463 107.5h2 M452 103.5h2 M459 105.5h2 M455 103.5h2 M457 106.5h2 M456 106.5h2 M456 101.5h2 M462 103.5h2 M454 104.5h2 M453 105.5h2 M462 105.5h2 M508 102.5h2 M506 103.5h2 M511 100.5h2 M511 100.5h2 M503 102.5h2 M512 103.5h2 M505 106.5h2 M504 103.5h2 M507 105.5h2 M510 104.5h2 M505 102.5h2 M503 106.5h2 M509 105.5h2 M503 103.5h2 M510 104.5h2 M502 103.5h2 M511 101.5h2 M503 102.5h2 M543 103.5h2 M534 100.5h2 M536 101.5h2 M540 100.5h2 M537 100.5h2 M548 102.5h2 M533 103.5h2 M533 101.5h2 M548 103.5h2 M544 101.5h2 M535 102.5h2 M534 100.5h2 M538 100.5h2 M538 103.5h2 M543 101.5h2 M542 101.5h2 M534 102.5h2 M538 102.5h2 M449 160.5h2 M447 161.5h2 M446 158.5h2 M448 162.5h2 M449 161.5h2 M449 161.5h2 M448 160.5h2 M446 161.5h2 M445 159.5h2 M449 161.5h2 M467 171.5h2 M466 171.5h2 M467 171.5h2 M467 173.5h2 M470 160.5h2 M477 158.5h2 M474 162.5h2 M469 159.5h2 M470 161.5h2 M479 159.5h2 M469 160.5h2 M474 161.5h2 M474 160.5h2 M478 159.5h2 M473 162.5h2 M471 160.5h2 M473 161.5h2 M470 162.5h2 M472 156.5h2 M471 158.5h2 M482 160.5h2 M488 163.5h2 M487 158.5h2 M485 163.5h2 M495 161.5h2 M485 164.5h2 M488 158.5h2 M484 164.5h2 M493 162.5h2 M489 161.5h2 M485 166.5h2 M487 162.5h2 M494 164.5h2 M489 159.5h2 M490 157.5h2 M494 159.5h2 M494 158.5h2 M487 158.5h2 M521 166.5h2 M512 170.5h2 M518 166.5h2 M518 168.5h2 M521 169.5h2 M526 167.5h2 M531 171.5h2 M513 171.5h2 M531 170.5h2 M515 171.5h2 M525 164.5h2 M512 172.5h2 M526 166.5h2 M514 165.5h2 M517 170.5h2 M519 166.5h2 M531 170.5h2 M515 171.5h2 M525 170.5h2 M526 171.5h2 M528 171.5h2 M516 170.5h2 M523 170.5h2 M521 171.5h2 M523 166.5h2 M517 165.5h2 M522 165.5h2 M522 165.5h2 M522 168.5h2 M523 171.5h2 M512 171.5h2 M522 169.5h2 M526 171.5h2 M520 168.5h2 M532 165.5h2 M525 169.5h2 M533 171.5h2 M545 173.5h2 M539 173.5h2 M542 171.5h2 M549 169.5h2 M546 171.5h2 M539 173.5h2 M539 171.5h2 M542 172.5h2 M537 171.5h2 M540 171.5h2 M548 170.5h2 M548 170.5h2 M549 166.5h2 M549 169.5h2 M550 168.5h2 M551 166.5h2 M551 167.5h2 M552 167.5h2 M553 167.5h2 M554 166.5h2 M554 165.5h2 M555 164.5h2 M556 166.5h2 M557 166.5h2 M558 165.5h2 M558 165.5h2 M559 165.5h2 M560 163.5h2 M560 164.5h2 M561 162.5h2 M561 162.5h2 M562 165.5h2 M563 163.5h2 M564 164.5h2 M611 100.5h2 M616 100.5h2 M632 101.5h2 M637 101.5h2 M639 101.5h2 M580 158.5h2 M619 162.5h2 M596 167.5h2 M661 148.5h2 M655 171.5h2 M588 101.5h2 M586 101.5h2 M586 101.5h2 M589 102.5h2 M584 101.5h2 M584 101.5h2 M590 101.5h2 M591 101.5h2 M599 101.5h2 M605 103.5h2 M609 101.5h2 M603 100.5h2 M605 100.5h2 M600 100.5h2 M598 102.5h2 M600 103.5h2 M599 103.5h2 M600 100.5h2 M627 101.5h2 M628 101.5h2 M620 105.5h2 M627 106.5h2 M628 100.5h2 M626 105.5h2 M625 106.5h2 M622 107.5h2 M627 100.5h2 M620 104.5h2 M675 100.5h2 M669 103.5h2 M667 104.5h2 M671 100.5h2 M670 102.5h2 M671 103.5h2 M667 103.5h2 M670 103.5h2 M673 102.5h2 M670 103.5h2 M677 103.5h2 M672 101.5h2 M666 104.5h2 M578 169.5h2 M571 167.5h2 M584 169.5h2 M576 165.5h2 M573 169.5h2 M572 168.5h2 M576 169.5h2 M580 165.5h2 M564 165.5h2 M573 167.5h2 M580 169.5h2 M565 169.5h2 M580 169.5h2 M576 165.5h2 M581 168.5h2 M578 169.5h2 M571 164.5h2 M575 168.5h2 M568 168.5h2 M583 165.5h2 M576 168.5h2 M573 165.5h2 M569 168.5h2 M580 166.5h2 M566 168.5h2 M580 165.5h2 M576 169.5h2 M582 167.5h2 M574 167.5h2 M568 164.5h2 M568 168.5h2 M571 167.5h2 M609 170.5h2 M595 166.5h2 M640 169.5h2 M593 171.5h2 M629 167.5h2 M619 169.5h2 M615 166.5h2 M589 173.5h2 M633 170.5h2 M617 168.5h2 M628 169.5h2 M637 172.5h2 M630 173.5h2 M601 166.5h2 M598 167.5h2 M592 167.5h2 M617 172.5h2 M612 173.5h2 M635 167.5h2 M619 169.5h2 M594 173.5h2 M601 170.5h2 M621 173.5h2 M623 169.5h2 M611 167.5h2 M638 173.5h2 M599 166.5h2 M601 169.5h2 M635 173.5h2 M631 166.5h2 M629 171.5h2 M621 173.5h2 M591 167.5h2 M627 173.5h2 M623 168.5h2 M619 172.5h2 M593 168.5h2 M601 167.5h2 M613 167.5h2 M600 167.5h2 M623 166.5h2 M625 168.5h2 M590 173.5h2 M599 173.5h2 M633 172.5h2 M595 169.5h2 M593 173.5h2 M632 171.5h2 M611 169.5h2 M631 170.5h2 M620 167.5h2 M599 167.5h2 M625 170.5h2 M595 172.5h2 M602 169.5h2 M596 168.5h2 M632 169.5h2 M596 170.5h2 M604 173.5h2 M594 173.5h2 M591 173.5h2 M623 168.5h2 M613 168.5h2 M601 168.5h2 M607 173.5h2 M640 173.5h2 M593 168.5h2 M634 167.5h2 M626 168.5h2 M639 166.5h2 M630 169.5h2 M595 166.5h2 M664 161.5h2 M645 160.5h2 M666 158.5h2 M656 157.5h2 M645 164.5h2 M660 158.5h2 M642 156.5h2 M657 161.5h2 M648 158.5h2 M657 163.5h2 M663 162.5h2 M646 156.5h2 M661 160.5h2 M660 156.5h2 M663 159.5h2 M664 165.5h2 M654 156.5h2 M666 161.5h2 M665 158.5h2 M645 164.5h2 M650 157.5h2 M650 162.5h2 M640 161.5h2 M653 161.5h2 M643 163.5h2 M663 165.5h2 M649 163.5h2 M651 163.5h2 M642 165.5h2 M667 161.5h2 M655 161.5h2 M655 156.5h2 M667 158.5h2 M645 157.5h2 M647 164.5h2 M641 157.5h2 M660 158.5h2 M640 162.5h2 M656 161.5h2 M660 157.5h2 M665 163.5h2 M641 157.5h2 M654 161.5h2 M648 157.5h2 M651 157.5h2 M657 165.5h2 M664 170.5h2 M675 167.5h2 M677 172.5h2 M669 169.5h2 M677 169.5h2 M669 172.5h2 M676 168.5h2 M666 168.5h2 M670 172.5h2 M676 172.5h2 M677 171.5h2 M662 169.5h2 M679 172.5h2 M666 169.5h2 M673 168.5h2 M671 167.5h2 M669 169.5h2 M662 167.5h2 M684 163.5h2 M684 162.5h2 M683 164.5h2 M683 156.5h2 M682 158.5h2 M682 159.5h2 M681 164.5h2 M682 158.5h2 M681 160.5h2 M684 159.5h2 M719 101.5h2 M727 104.5h2 M766 100.5h2 M772 101.5h2 M776 101.5h2 M774 105.5h2 M773 108.5h2 M715 153.5h2 M706 166.5h2 M714 165.5h2 M734 156.5h2 M734 160.5h2 M739 160.5h2 M774 147.5h2 M769 166.5h2 M763 169.5h2 M766 169.5h2 M768 169.5h2 M789 158.5h2 M797 164.5h2 M733 101.5h2 M732 101.5h2 M738 101.5h2 M733 101.5h2 M735 100.5h2 M732 100.5h2 M792 103.5h2 M792 102.5h2 M789 104.5h2 M801 104.5h2 M797 105.5h2 M791 105.5h2 M795 104.5h2 M797 103.5h2 M792 102.5h2 M791 104.5h2 M794 104.5h2 M787 102.5h2 M802 102.5h2 M797 104.5h2 M792 107.5h2 M792 106.5h2 M790 100.5h2 M802 103.5h2 M788 103.5h2 M795 105.5h2 M789 101.5h2 M803 105.5h2 M790 102.5h2 M793 105.5h2 M798 106.5h2 M801 104.5h2 M800 105.5h2 M800 103.5h2 M800 105.5h2 M740 163.5h2 M739 161.5h2 M736 167.5h2 M729 171.5h2 M731 166.5h2 M736 170.5h2 M732 165.5h2 M728 166.5h2 M735 164.5h2 M726 167.5h2 M726 165.5h2 M737 170.5h2 M729 166.5h2 M721 164.5h2 M720 167.5h2 M731 162.5h2 M740 165.5h2 M738 170.5h2 M741 163.5h2 M727 171.5h2 M716 162.5h2 M731 166.5h2 M740 169.5h2 M730 171.5h2 M730 167.5h2 M734 165.5h2 M725 167.5h2 M725 171.5h2 M734 167.5h2 M719 165.5h2 M726 167.5h2 M731 170.5h2 M762 153.5h2 M751 154.5h2 M762 152.5h2 M753 155.5h2 M745 152.5h2 M762 156.5h2 M752 151.5h2 M760 155.5h2 M759 157.5h2 M760 153.5h2 M745 152.5h2 M752 153.5h2 M745 151.5h2 M755 154.5h2 M749 157.5h2 M755 150.5h2 M750 155.5h2 M748 155.5h2 M742 152.5h2 M759 154.5h2 M755 151.5h2 M752 154.5h2 M747 154.5h2 M753 157.5h2 M753 153.5h2 M744 151.5h2 M757 151.5h2 M744 151.5h2 M752 156.5h2 M754 155.5h2 M743 150.5h2 M758 152.5h2 M756 152.5h2 M745 152.5h2 M744 156.5h2 M754 152.5h2 M766 156.5h2 M762 160.5h2 M767 161.5h2 M766 158.5h2 M764 153.5h2 M771 160.5h2 M764 161.5h2 M770 155.5h2 M768 161.5h2 M766 161.5h2 M764 156.5h2 M769 154.5h2 M764 160.5h2 M784 171.5h2 M778 164.5h2 M781 164.5h2 M796 166.5h2 M786 164.5h2 M785 166.5h2 M782 163.5h2 M775 171.5h2 M780 165.5h2 M777 165.5h2 M778 163.5h2 M788 166.5h2 M776 170.5h2 M774 165.5h2 M793 164.5h2 M783 171.5h2 M792 164.5h2 M781 170.5h2 M781 172.5h2 M777 172.5h2 M784 165.5h2 M783 164.5h2 M789 165.5h2 M794 169.5h2 M781 165.5h2 M787 165.5h2 M793 164.5h2 M785 168.5h2 M778 170.5h2 M781 169.5h2 M786 166.5h2 M781 163.5h2 M776 171.5h2 M780 169.5h2 M774 168.5h2 M781 168.5h2 M684 157.5h2 M685 157.5h2 M686 159.5h2 M686 158.5h2 M687 160.5h2 M688 160.5h2 M688 158.5h2 M689 159.5h2 M690 158.5h2 M691 159.5h2 M692 158.5h2 M692 158.5h2 M693 158.5h2 M693 161.5h2 M694 160.5h2 M695 157.5h2 M695 158.5h2 M696 159.5h2 M697 158.5h2 M698 158.5h2 M699 159.5h2 M699 158.5h2 M700 160.5h2 M701 157.5h2 M702 161.5h2 M702 157.5h2 M703 160.5h2 M703 158.5h2 M704 161.5h2 M705 161.5h2 M706 158.5h2 M707 159.5h2 M707 161.5h2 M708 158.5h2 M709 159.5h2 M710 161.5h2 M710 161.5h2 M711 160.5h2 M711 161.5h2 M712 160.5h2 M713 158.5h2 M714 158.5h2 M714 161.5h2 M715 160.5h2 M716 161.5h2 M716 159.5h2 M717 159.5h2 M718 159.5h2 M718 159.5h2 M719 161.5h2 M812 116.5h2 M913 115.5h2 M919 112.5h2 M929 108.5h2 M810 173.5h2 M814 172.5h2 M823 171.5h2 M828 170.5h2 M844 157.5h2 M846 163.5h2 M844 170.5h2 M844 171.5h2 M856 172.5h2 M885 172.5h2 M893 157.5h2 M910 163.5h2 M911 165.5h2 M912 171.5h2 M926 172.5h2 M925 172.5h2 M828 100.5h2 M857 102.5h2 M900 101.5h2 M835 104.5h2 M819 102.5h2 M838 104.5h2 M860 103.5h2 M821 103.5h2 M865 102.5h2 M883 104.5h2 M816 101.5h2 M841 100.5h2 M810 101.5h2 M824 103.5h2 M850 100.5h2 M837 102.5h2 M841 100.5h2 M811 99.5h2 M906 103.5h2 M813 103.5h2 M905 102.5h2 M815 102.5h2 M849 100.5h2 M860 99.5h2 M898 103.5h2 M868 104.5h2 M871 100.5h2 M829 100.5h2 M807 103.5h2 M890 101.5h2 M823 103.5h2 M891 104.5h2 M821 103.5h2 M889 103.5h2 M837 100.5h2 M889 101.5h2 M842 102.5h2 M842 104.5h2 M829 99.5h2 M862 103.5h2 M888 103.5h2 M897 104.5h2 M855 102.5h2 M820 101.5h2 M864 100.5h2 M875 100.5h2 M849 104.5h2 M813 99.5h2 M849 100.5h2 M878 99.5h2 M890 104.5h2 M885 101.5h2 M833 103.5h2 M857 101.5h2 M839 102.5h2 M872 104.5h2 M897 100.5h2 M834 102.5h2 M862 101.5h2 M824 100.5h2 M837 102.5h2 M904 104.5h2 M893 104.5h2 M903 102.5h2 M887 99.5h2 M873 102.5h2 M834 102.5h2 M902 102.5h2 M870 101.5h2 M839 104.5h2 M807 100.5h2 M874 102.5h2 M813 103.5h2 M842 102.5h2 M847 102.5h2 M862 101.5h2 M816 100.5h2 M895 102.5h2 M816 104.5h2 M830 100.5h2 M858 100.5h2 M854 102.5h2 M827 102.5h2 M816 102.5h2 M864 100.5h2 M846 100.5h2 M849 104.5h2 M860 103.5h2 M882 100.5h2 M906 103.5h2 M814 104.5h2 M844 100.5h2 M902 102.5h2 M883 100.5h2 M884 99.5h2 M828 101.5h2 M806 102.5h2 M826 101.5h2 M877 101.5h2 M895 102.5h2 M893 102.5h2 M898 104.5h2 M821 103.5h2 M839 103.5h2 M874 104.5h2 M817 101.5h2 M880 104.5h2 M878 99.5h2 M866 100.5h2 M860 103.5h2 M816 110.5h2 M873 105.5h2 M824 106.5h2 M890 107.5h2 M816 103.5h2 M815 109.5h2 M823 107.5h2 M834 108.5h2 M843 104.5h2 M894 107.5h2 M875 109.5h2 M901 103.5h2 M839 104.5h2 M855 109.5h2 M886 103.5h2 M823 109.5h2 M874 106.5h2 M853 104.5h2 M891 106.5h2 M894 108.5h2 M812 106.5h2 M826 110.5h2 M864 104.5h2 M821 106.5h2 M852 107.5h2 M844 106.5h2 M805 107.5h2 M838 103.5h2 M851 110.5h2 M809 104.5h2 M873 105.5h2 M832 107.5h2 M831 107.5h2 M858 110.5h2 M906 103.5h2 M861 109.5h2 M893 109.5h2 M869 108.5h2 M841 105.5h2 M886 109.5h2 M900 108.5h2 M835 109.5h2 M880 107.5h2 M869 106.5h2 M860 106.5h2 M810 106.5h2 M837 110.5h2 M853 106.5h2 M829 105.5h2 M840 104.5h2 M805 109.5h2 M850 106.5h2 M923 103.5h2 M912 101.5h2 M916 103.5h2 M927 105.5h2 M932 103.5h2 M932 105.5h2 M910 102.5h2 M923 109.5h2 M917 107.5h2 M919 108.5h2 M910 104.5h2 M931 103.5h2 M915 100.5h2 M912 102.5h2 M926 102.5h2 M918 102.5h2 M924 108.5h2 M925 102.5h2 M927 108.5h2 M924 101.5h2 M929 108.5h2 M917 101.5h2 M913 105.5h2 M931 106.5h2 M932 102.5h2 M916 107.5h2 M925 104.5h2 M926 103.5h2 M909 104.5h2 M909 106.5h2 M917 104.5h2 M923 102.5h2 M869 170.5h2 M875 172.5h2 M876 170.5h2 M871 172.5h2 M867 170.5h2 M864 170.5h2 M873 170.5h2 M874 171.5h2 M870 172.5h2 M870 172.5h2 M905 169.5h2 M906 169.5h2 M906 171.5h2 M907 169.5h2 M907 171.5h2 M903 169.5h2 M904 171.5h2 M900 168.5h2 M904 170.5h2 M907 169.5h2 M909 168.5h2 M907 168.5h2 M899 168.5h2 M899 170.5h2 M904 168.5h2 M909 169.5h2" stroke="#000" stroke-width="1" fill="none"/>
</g></svg>
</body></html>
